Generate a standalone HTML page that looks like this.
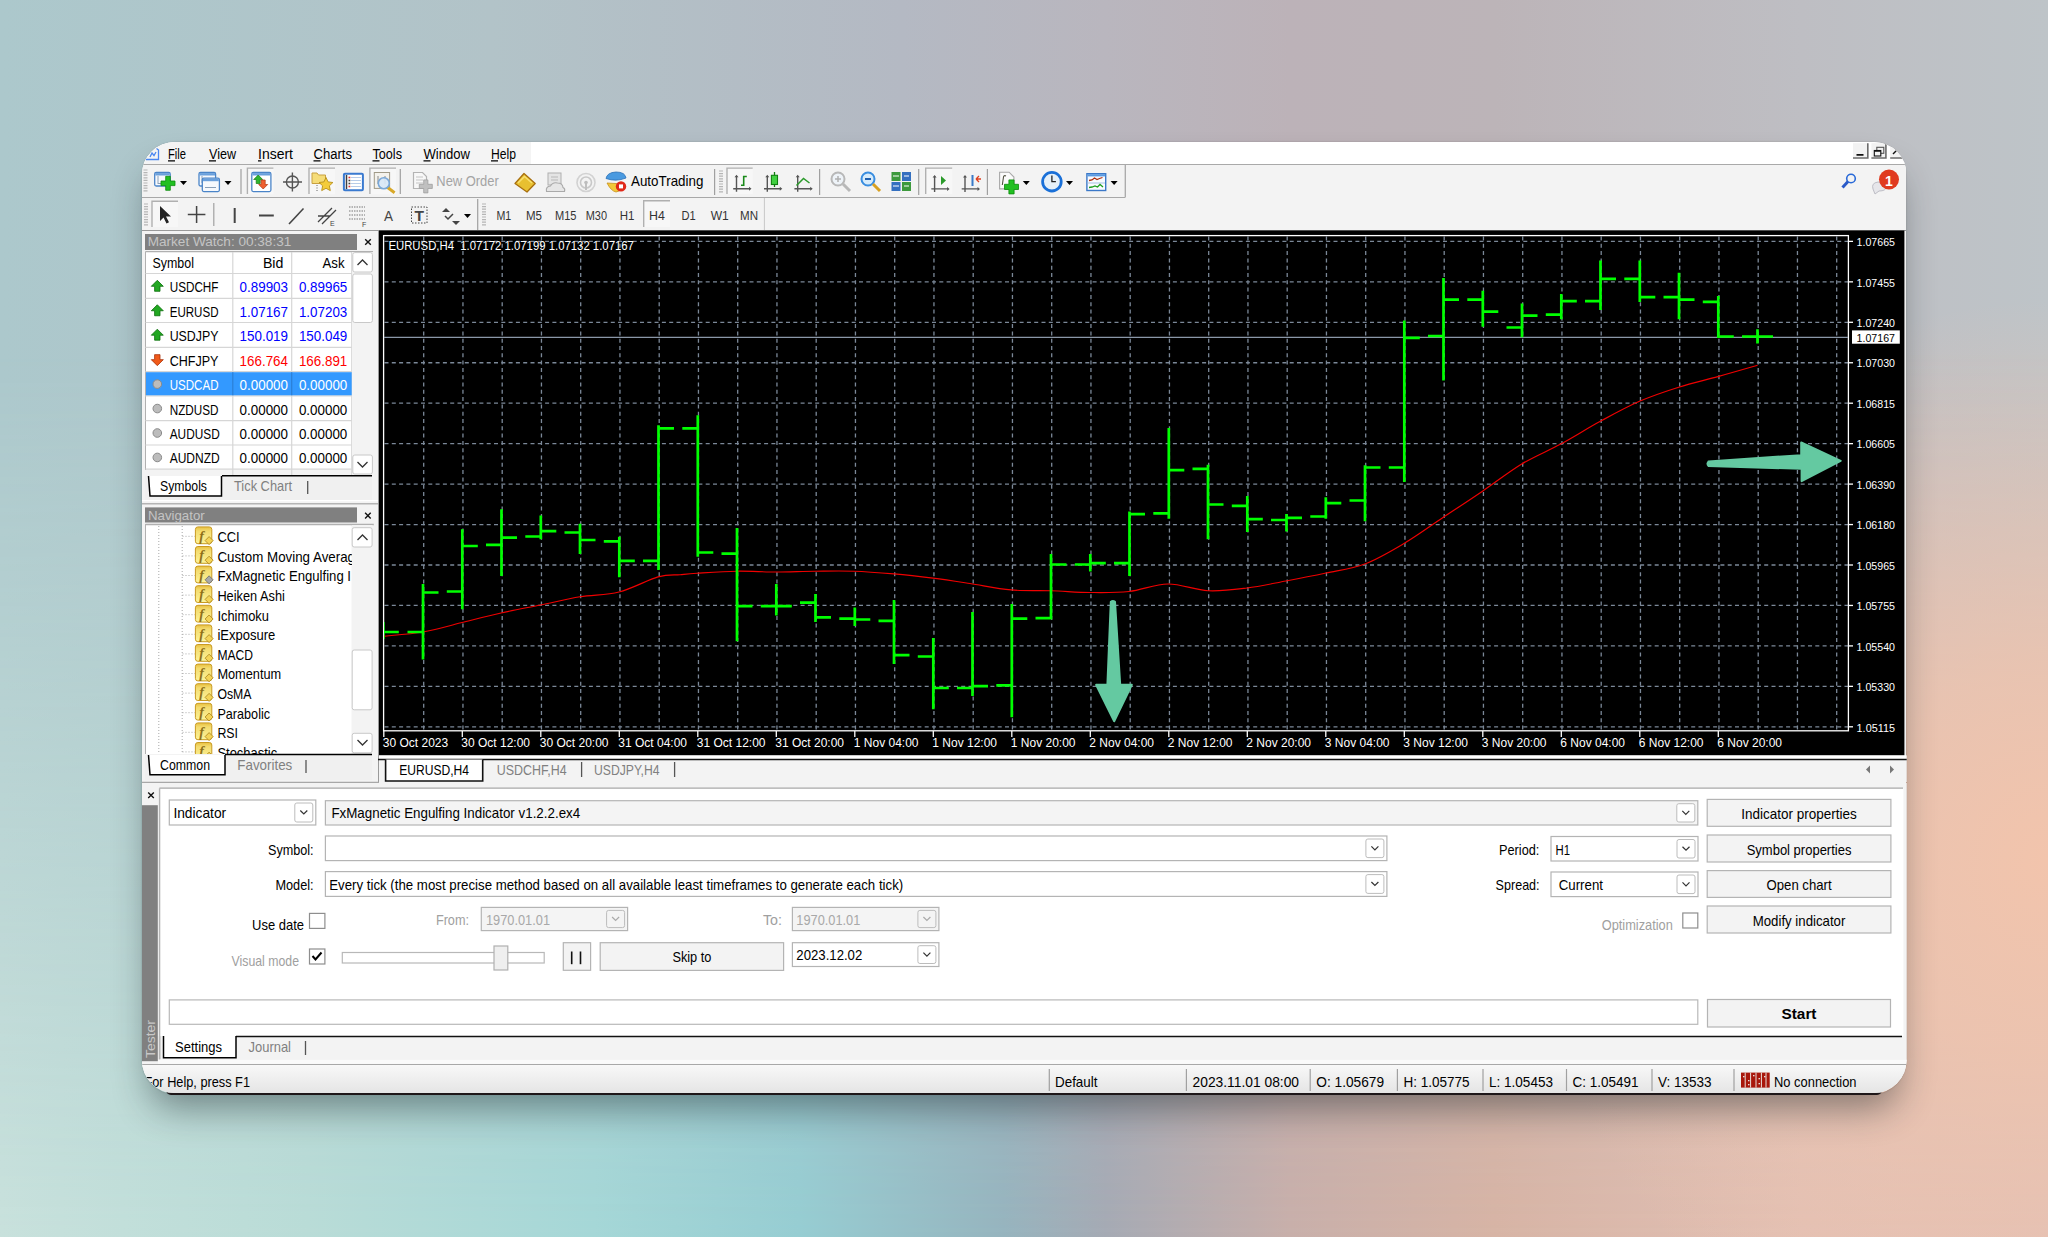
<!DOCTYPE html>
<html><head><meta charset="utf-8"><title>MetaTrader 4</title>
<style>
html,body{margin:0;padding:0;}
body{width:2048px;height:1237px;overflow:hidden;position:relative;font-family:"Liberation Sans", sans-serif;
background:linear-gradient(90deg, rgb(172,200,204) 0%, rgb(178,195,200) 24%, rgb(180,185,195) 44%, rgb(185,182,190) 54%, rgb(188,178,184) 63%, rgb(188,180,184) 73%, rgb(190,190,195) 88%, rgb(190,196,200) 100%);
}
#bg2{position:absolute;left:0;top:0;width:2048px;height:1237px;
background:linear-gradient(90deg, rgb(200,225,220) 0%, rgb(185,220,215) 15%, rgb(165,215,215) 29%, rgb(150,205,210) 39%, rgb(150,180,190) 49%, rgb(165,170,180) 54%, rgb(200,175,170) 63%, rgb(215,180,165) 73%, rgb(226,192,180) 88%, rgb(224,192,182) 100%);
-webkit-mask-image:linear-gradient(180deg, rgba(0,0,0,0) 0px, rgba(0,0,0,0) 350px, rgba(0,0,0,1) 1237px);mask-image:linear-gradient(180deg, rgba(0,0,0,0) 0px, rgba(0,0,0,0) 350px, rgba(0,0,0,1) 1237px);}
#bg3{position:absolute;left:0;top:0;width:2048px;height:1237px;background:radial-gradient(ellipse 520px 560px at 2048px 860px, rgba(242,196,172,1) 0%, rgba(242,196,172,0.75) 35%, rgba(242,196,172,0) 100%);}
#band{position:absolute;left:166px;top:1090px;width:1716px;height:5px;background:#1e1719;border-radius:0 0 16px 16px;}
#shadow{position:absolute;left:142px;top:142px;width:1764px;height:952px;border-radius:33px;box-shadow:0 0 1.5px rgba(0,0,0,0.3), 0 22px 36px -8px rgba(20,30,35,0.45);}
svg{position:absolute;left:0;top:0;}
text{font-family:"Liberation Sans", sans-serif;}
</style></head><body>
<div id="bg2"></div><div id="bg3"></div><div id="shadow"></div><div id="band"></div>
<svg width="2048" height="1237" viewBox="0 0 2048 1237">
<defs>
<clipPath id="win"><rect x="141.8" y="142" width="1764.9" height="950.9" rx="33" ry="33"/></clipPath>
<clipPath id="plot"><rect x="380" y="232" width="1525" height="524"/></clipPath>
<linearGradient id="navg" x1="0" y1="0" x2="0" y2="1"><stop offset="0" stop-color="#e8c040"/><stop offset="0.25" stop-color="#f4dc70"/><stop offset="1" stop-color="#fcf49a"/></linearGradient>
<linearGradient id="sbar" x1="0" y1="0" x2="0" y2="1"><stop offset="0" stop-color="#f8f8f8"/><stop offset="1" stop-color="#e4e4e4"/></linearGradient>
</defs>
<g clip-path="url(#win)">

<rect x="142" y="142" width="1764" height="952" fill="#f3f3f3"/>
<rect x="142" y="142" width="1764" height="22" fill="#ffffff"/>
<rect x="142" y="142" width="389" height="22" fill="#f4f4f4"/>
<line x1="142" y1="164.5" x2="1906" y2="164.5" stroke="#a9a9a9" stroke-width="1"/>
<text x="168" y="159.3" font-size="14" fill="#000" textLength="18.0" lengthAdjust="spacingAndGlyphs">File</text>
<line x1="168" y1="160.8" x2="175" y2="160.8" stroke="#000" stroke-width="1.2"/>
<text x="209" y="159.3" font-size="14" fill="#000" textLength="27.0" lengthAdjust="spacingAndGlyphs">View</text>
<line x1="209" y1="160.8" x2="216" y2="160.8" stroke="#000" stroke-width="1.2"/>
<text x="258" y="159.3" font-size="14" fill="#000" textLength="35.0" lengthAdjust="spacingAndGlyphs">Insert</text>
<line x1="258" y1="160.8" x2="261.5" y2="160.8" stroke="#000" stroke-width="1.2"/>
<text x="313.5" y="159.3" font-size="14" fill="#000" textLength="38.5" lengthAdjust="spacingAndGlyphs">Charts</text>
<line x1="313.5" y1="160.8" x2="320.5" y2="160.8" stroke="#000" stroke-width="1.2"/>
<text x="372.5" y="159.3" font-size="14" fill="#000" textLength="29.5" lengthAdjust="spacingAndGlyphs">Tools</text>
<line x1="372.5" y1="160.8" x2="379.5" y2="160.8" stroke="#000" stroke-width="1.2"/>
<text x="423.5" y="159.3" font-size="14" fill="#000" textLength="46.5" lengthAdjust="spacingAndGlyphs">Window</text>
<line x1="423.5" y1="160.8" x2="430.5" y2="160.8" stroke="#000" stroke-width="1.2"/>
<text x="491" y="159.3" font-size="14" fill="#000" textLength="25.0" lengthAdjust="spacingAndGlyphs">Help</text>
<line x1="491" y1="160.8" x2="498" y2="160.8" stroke="#000" stroke-width="1.2"/>
<path d="M146 159.5 H158.5 V150 L156.5 148.5" fill="none" stroke="#4a86f0" stroke-width="1.3"/><path d="M150 157 L152 153 L154 155.5 L156 152" fill="none" stroke="#4a86f0" stroke-width="1.3"/>
<rect x="1853" y="143.2" width="15.599999999999909" height="15.5" fill="#f2f2f2"/>
<path d="M1853 158 H1867.8 V143.2" fill="none" stroke="#6c6c6c" stroke-width="1.6"/>
<rect x="1871.4" y="143.2" width="15.299999999999955" height="15.5" fill="#f2f2f2"/>
<path d="M1871.4 158 H1885.9 V143.2" fill="none" stroke="#6c6c6c" stroke-width="1.6"/>
<rect x="1890.2" y="143.2" width="15.299999999999955" height="15.5" fill="#f2f2f2"/>
<path d="M1890.2 158 H1904.7 V143.2" fill="none" stroke="#6c6c6c" stroke-width="1.6"/>
<line x1="1856.5" y1="154.8" x2="1863.5" y2="154.8" stroke="#111" stroke-width="1.8"/>
<rect x="1876.8" y="147.3" width="7" height="6" fill="none" stroke="#555" stroke-width="1.1"/>
<rect x="1874.3" y="150.5" width="6.5" height="5.5" fill="#f2f2f2" stroke="#111" stroke-width="1.1"/>
<line x1="1874.3" y1="151" x2="1880.8" y2="151" stroke="#111" stroke-width="1.6"/>
<line x1="1893" y1="154" x2="1897" y2="150" stroke="#111" stroke-width="1.4"/>
<rect x="142" y="165" width="1764" height="32" fill="#f3f3f3"/>
<line x1="142" y1="197.5" x2="1125.5" y2="197.5" stroke="#a8a8a8" stroke-width="1"/>
<rect x="142" y="198" width="1764" height="32" fill="#f3f3f3"/>
<line x1="142" y1="230.5" x2="1906" y2="230.5" stroke="#9a9a9a" stroke-width="1"/>
<line x1="143.5" y1="170" x2="147.5" y2="170" stroke="#b5b5b5" stroke-width="1.2"/>
<line x1="143.5" y1="172.6" x2="147.5" y2="172.6" stroke="#b5b5b5" stroke-width="1.2"/>
<line x1="143.5" y1="175.2" x2="147.5" y2="175.2" stroke="#b5b5b5" stroke-width="1.2"/>
<line x1="143.5" y1="177.79999999999998" x2="147.5" y2="177.79999999999998" stroke="#b5b5b5" stroke-width="1.2"/>
<line x1="143.5" y1="180.39999999999998" x2="147.5" y2="180.39999999999998" stroke="#b5b5b5" stroke-width="1.2"/>
<line x1="143.5" y1="182.99999999999997" x2="147.5" y2="182.99999999999997" stroke="#b5b5b5" stroke-width="1.2"/>
<line x1="143.5" y1="185.59999999999997" x2="147.5" y2="185.59999999999997" stroke="#b5b5b5" stroke-width="1.2"/>
<line x1="143.5" y1="188.19999999999996" x2="147.5" y2="188.19999999999996" stroke="#b5b5b5" stroke-width="1.2"/>
<line x1="143.5" y1="190.79999999999995" x2="147.5" y2="190.79999999999995" stroke="#b5b5b5" stroke-width="1.2"/>
<line x1="1125.3" y1="165" x2="1125.3" y2="197" stroke="#a8a8a8" stroke-width="1.3"/>
<rect x="154.7" y="172.5" width="15.5" height="13.5" fill="#f6f9fd" stroke="#4a84c8" stroke-width="1.3" rx="1.5"/>
<rect x="155.29999999999998" y="173.1" width="14.3" height="2.4" fill="#6aa0dc"/>
<line x1="158" y1="176" x2="158" y2="184" stroke="#8aa0b8" stroke-width="1"/>
<line x1="158" y1="183.5" x2="166" y2="183.5" stroke="#8aa0b8" stroke-width="1"/>
<path d="M165.7 176.3 h4.6 v4.7 h4.7 v4.6 h-4.7 v4.7 h-4.6 v-4.7 h-4.7 v-4.6 h4.7 z" fill="#21c021" stroke="#0b8a0b" stroke-width="0.8"/>
<path d="M180 181 L187 181 L183.5 185 Z" fill="#000"/>
<rect x="199" y="172.5" width="16.599999999999994" height="13.5" fill="#f6f9fd" stroke="#4a84c8" stroke-width="1.3" rx="1.5"/>
<rect x="199.6" y="173.1" width="15.399999999999995" height="2.4" fill="#6aa0dc"/>
<line x1="202" y1="176" x2="202" y2="183" stroke="#8aa0b8" stroke-width="1"/>
<line x1="202" y1="182" x2="212" y2="182" stroke="#8aa0b8" stroke-width="1"/>
<rect x="202.3" y="178.2" width="17.099999999999994" height="13.400000000000006" fill="#f6f9fd" stroke="#4a84c8" stroke-width="1.3" rx="1.5"/>
<rect x="202.9" y="178.79999999999998" width="15.899999999999995" height="2.4" fill="#6aa0dc"/>
<line x1="205" y1="187.5" x2="216" y2="187.5" stroke="#8aa0b8" stroke-width="1"/>
<path d="M224.5 181 L231.5 181 L228.0 185 Z" fill="#000"/>
<line x1="241" y1="169" x2="241" y2="194" stroke="#a0a0a0" stroke-width="1.2"/>
<rect x="246.7" y="167.4" width="26.69999999999999" height="26.69999999999999" fill="#f7f7f7"/>
<path d="M247.39999999999998 194.1 V168.1 H273.4" fill="none" stroke="#b0b0b0" stroke-width="1.4"/>
<rect x="251.8" y="172.5" width="19.099999999999966" height="19.099999999999994" fill="#ffffff" stroke="#4a84c8" stroke-width="1.3" rx="1.5"/>
<rect x="252.4" y="173.1" width="17.899999999999967" height="2.4" fill="#6aa0dc"/>
<path d="M258.2 175 l4.5 4.5 h-2.5 v4 h-4 v-4 h-2.5 z" fill="#2fb52f" stroke="#157a15" stroke-width="0.7"/>
<path d="M263.2 189 l4.5 -4.5 h-2.5 v-4.5 h-4 v4.5 h-2.5 z" fill="#f06030" stroke="#b03810" stroke-width="0.7"/>
<circle cx="292.4" cy="182" r="6" fill="none" stroke="#555" stroke-width="1.4"/>
<line x1="283" y1="182" x2="302" y2="182" stroke="#555" stroke-width="1.4"/>
<line x1="292.4" y1="172.5" x2="292.4" y2="191.5" stroke="#555" stroke-width="1.4"/>
<rect x="308.3" y="167.4" width="26.69999999999999" height="26.69999999999999" fill="#f7f7f7"/>
<path d="M309.0 194.1 V168.1 H335" fill="none" stroke="#b0b0b0" stroke-width="1.4"/>
<path d="M312 173 h5 l1.5 2 h7 v8.5 h-13.5 z" fill="#f5dc78" stroke="#c8a040" stroke-width="1"/>
<path d="M326 177.5 l2.1 4.4 l4.8 0.6 l-3.5 3.3 l0.9 4.8 l-4.3 -2.3 l-4.3 2.3 l0.9 -4.8 l-3.5 -3.3 l4.8 -0.6 z" fill="#f4cc3a" stroke="#b8901a" stroke-width="0.9"/>
<line x1="317" y1="185" x2="317" y2="192" stroke="#666" stroke-width="1" stroke-dasharray="1 1.5"/>
<rect x="343.9" y="173.8" width="19" height="16.5" fill="#ffffff" stroke="#3a7ad0" stroke-width="2" rx="1"/>
<line x1="346.5" y1="175" x2="346.5" y2="189" stroke="#404040" stroke-width="1.5"/>
<rect x="348.5" y="176.7" width="1.8" height="1.6" fill="#e03030"/>
<line x1="351" y1="177.5" x2="361" y2="177.5" stroke="#b8cce8" stroke-width="1"/>
<rect x="348.5" y="179.7" width="1.8" height="1.6" fill="#404040"/>
<line x1="351" y1="180.5" x2="361" y2="180.5" stroke="#b8cce8" stroke-width="1"/>
<rect x="348.5" y="182.7" width="1.8" height="1.6" fill="#404040"/>
<line x1="351" y1="183.5" x2="361" y2="183.5" stroke="#b8cce8" stroke-width="1"/>
<rect x="348.5" y="185.7" width="1.8" height="1.6" fill="#e03030"/>
<line x1="351" y1="186.5" x2="361" y2="186.5" stroke="#b8cce8" stroke-width="1"/>
<rect x="369.2" y="167.4" width="26.80000000000001" height="26.69999999999999" fill="#f7f7f7"/>
<path d="M369.9 194.1 V168.1 H396" fill="none" stroke="#b0b0b0" stroke-width="1.4"/>
<rect x="374.3" y="172.5" width="15.3" height="15.9" fill="#f4f2ec" stroke="#a09a88" stroke-width="1"/>
<line x1="378" y1="176" x2="378" y2="184" stroke="#888" stroke-width="1"/>
<line x1="385" y1="176" x2="385" y2="184" stroke="#888" stroke-width="1"/>
<line x1="387" y1="187" x2="394.6" y2="192.8" stroke="#d8a828" stroke-width="3"/>
<circle cx="383.8" cy="183.3" r="5.5" fill="#d8e8f8" fill-opacity="0.9" stroke="#7aa8d8" stroke-width="1.6"/>
<line x1="400.3" y1="169" x2="400.3" y2="194" stroke="#a0a0a0" stroke-width="1.2"/>
<path d="M413.5 172.5 h9 l4 4 v12 h-13 z" fill="#f8f8f8" stroke="#b4b4b4" stroke-width="1.2"/>
<line x1="416" y1="177" x2="423" y2="177" stroke="#c4c4c4" stroke-width="1"/>
<line x1="416" y1="180" x2="423" y2="180" stroke="#c4c4c4" stroke-width="1"/>
<line x1="416" y1="183" x2="423" y2="183" stroke="#c4c4c4" stroke-width="1"/>
<path d="M423.7 179.9 h4.2 v4.4 h4.4 v4.2 h-4.4 v4.4 h-4.2 v-4.4 h-4.4 v-4.2 h4.4 z" fill="#c0c0c0" stroke="#a0a0a0" stroke-width="0.8"/>
<text x="436.3" y="186.4" font-size="14.3" fill="#a4a4a4" textLength="62.5" lengthAdjust="spacingAndGlyphs">New Order</text>
<path d="M515 183.5 L524 173.5 L535.2 183.5 L527 192 Z" fill="#e8c030" stroke="#a87010" stroke-width="1.3" stroke-linejoin="round"/>
<path d="M518 183 L524.5 176.5 L532 183" fill="none" stroke="#f8e070" stroke-width="1.5"/>
<rect x="548" y="173" width="13" height="12" fill="#e4e4e4" stroke="#b0b0b0" stroke-width="1"/>
<line x1="551" y1="177" x2="558" y2="177" stroke="#b8b8b8" stroke-width="1"/>
<line x1="551" y1="180" x2="558" y2="180" stroke="#b8b8b8" stroke-width="1"/>
<path d="M546.5 191.5 q-1 -5 4 -5.5 q2 -4 7 -3 q5 0 5.5 4.5 q2.5 1 1.5 4 z" fill="#e6e6e6" stroke="#aaaaaa" stroke-width="1.1"/>
<circle cx="586" cy="182.5" r="9" fill="none" stroke="#d2d2d2" stroke-width="1.6"/><circle cx="586" cy="182.5" r="5.5" fill="none" stroke="#c8c8c8" stroke-width="1.6"/><path d="M586 183 v7" stroke="#c0c0c0" stroke-width="2"/><circle cx="586" cy="182.5" r="1.8" fill="#bdbdbd"/>
<path d="M607 183 q4 8 9 9 q6 -1 8 -8 z" fill="#f2c838" stroke="#c89020" stroke-width="0.8"/>
<path d="M606 178.5 q1 -6 10 -6.5 q9 0 10 6 q-10 4 -20 0.5 z" fill="#4a9ae0" stroke="#2a70b8" stroke-width="0.8"/>
<circle cx="621" cy="186.4" r="5.2" fill="#e02818"/><rect x="619" y="184.4" width="4" height="4" fill="#fff"/>
<text x="631" y="186.4" font-size="14.3" fill="#000" textLength="72.4" lengthAdjust="spacingAndGlyphs">AutoTrading</text>
<line x1="714.6" y1="169" x2="714.6" y2="195" stroke="#a0a0a0" stroke-width="1.2"/>
<line x1="719" y1="171" x2="723" y2="171" stroke="#b5b5b5" stroke-width="1.2"/>
<line x1="719" y1="173.6" x2="723" y2="173.6" stroke="#b5b5b5" stroke-width="1.2"/>
<line x1="719" y1="176.2" x2="723" y2="176.2" stroke="#b5b5b5" stroke-width="1.2"/>
<line x1="719" y1="178.79999999999998" x2="723" y2="178.79999999999998" stroke="#b5b5b5" stroke-width="1.2"/>
<line x1="719" y1="181.39999999999998" x2="723" y2="181.39999999999998" stroke="#b5b5b5" stroke-width="1.2"/>
<line x1="719" y1="183.99999999999997" x2="723" y2="183.99999999999997" stroke="#b5b5b5" stroke-width="1.2"/>
<line x1="719" y1="186.59999999999997" x2="723" y2="186.59999999999997" stroke="#b5b5b5" stroke-width="1.2"/>
<line x1="719" y1="189.19999999999996" x2="723" y2="189.19999999999996" stroke="#b5b5b5" stroke-width="1.2"/>
<line x1="719" y1="191.79999999999995" x2="723" y2="191.79999999999995" stroke="#b5b5b5" stroke-width="1.2"/>
<rect x="726.3" y="167.4" width="26.40000000000009" height="26.599999999999994" fill="#f7f7f7"/>
<path d="M727.0 194 V168.1 H752.7" fill="none" stroke="#b0b0b0" stroke-width="1.4"/>
<line x1="736.5" y1="176.3" x2="736.5" y2="191.8" stroke="#555" stroke-width="1.4"/>
<line x1="733.2" y1="188.8" x2="750.0" y2="188.8" stroke="#555" stroke-width="1.4"/>
<path d="M734.5 177.3 L736.5 174.8 L738.5 177.3 Z M749.0 186.8 L751.5 188.8 L749.0 190.8 Z" fill="#555"/>
<path d="M741 185.3 H743.7 V176.5 H746.8" fill="none" stroke="#1a8a1a" stroke-width="1.6"/>
<line x1="767.3" y1="176.3" x2="767.3" y2="191.8" stroke="#555" stroke-width="1.4"/>
<line x1="764.0" y1="188.8" x2="780.8" y2="188.8" stroke="#555" stroke-width="1.4"/>
<path d="M765.3 177.3 L767.3 174.8 L769.3 177.3 Z M779.8 186.8 L782.3 188.8 L779.8 190.8 Z" fill="#555"/>
<line x1="774.5" y1="172" x2="774.5" y2="187" stroke="#108010" stroke-width="1.3"/>
<rect x="771.4" y="175.3" width="6.1" height="9.2" fill="#40d040" stroke="#108010" stroke-width="1.1"/>
<line x1="797.7" y1="176.3" x2="797.7" y2="191.8" stroke="#555" stroke-width="1.4"/>
<line x1="794.4000000000001" y1="188.8" x2="811.2" y2="188.8" stroke="#555" stroke-width="1.4"/>
<path d="M795.7 177.3 L797.7 174.8 L799.7 177.3 Z M810.2 186.8 L812.7 188.8 L810.2 190.8 Z" fill="#555"/>
<path d="M796.5 185.5 L803.5 178.5 L809.5 183" fill="none" stroke="#2a9a2a" stroke-width="1.5"/>
<line x1="819.6" y1="169" x2="819.6" y2="195" stroke="#a0a0a0" stroke-width="1.2"/>
<circle cx="838" cy="179" r="6.5" fill="#eef3f8" stroke="#b8b8b8" stroke-width="2"/><path d="M835 179 h6 M838 176 v6" stroke="#b0b0b0" stroke-width="1.5"/>
<line x1="843" y1="184" x2="850" y2="191" stroke="#b8b8b8" stroke-width="3"/>
<circle cx="868" cy="179" r="6.5" fill="#d8ecfb" stroke="#3a8ee0" stroke-width="2"/><path d="M865 179 h6" stroke="#2060b0" stroke-width="2"/>
<line x1="873" y1="184" x2="880" y2="191" stroke="#d8a020" stroke-width="3"/>
<rect x="891.5" y="172" width="9" height="9" fill="#3d9a3d"/>
<rect x="902" y="172" width="9" height="9" fill="#3470c0"/>
<rect x="891.5" y="182" width="9" height="9" fill="#3470c0"/>
<rect x="902" y="182" width="9" height="9" fill="#3d9a3d"/>
<line x1="893" y1="176" x2="899" y2="176" stroke="#fff" stroke-width="1.2"/>
<line x1="904" y1="176" x2="909" y2="176" stroke="#fff" stroke-width="1.2"/>
<line x1="893" y1="186" x2="899" y2="186" stroke="#fff" stroke-width="1.2"/>
<line x1="904" y1="186" x2="909" y2="186" stroke="#fff" stroke-width="1.2"/>
<line x1="918.7" y1="169" x2="918.7" y2="195" stroke="#a0a0a0" stroke-width="1.2"/>
<rect x="925" y="167.4" width="27.200000000000045" height="26.599999999999994" fill="#f7f7f7"/>
<path d="M925.7 194 V168.1 H952.2" fill="none" stroke="#b0b0b0" stroke-width="1.4"/>
<line x1="934.6" y1="176.4" x2="934.6" y2="191.9" stroke="#555" stroke-width="1.4"/>
<line x1="931.3000000000001" y1="188.9" x2="948.1" y2="188.9" stroke="#555" stroke-width="1.4"/>
<path d="M932.6 177.4 L934.6 174.9 L936.6 177.4 Z M947.1 186.9 L949.6 188.9 L947.1 190.9 Z" fill="#555"/>
<path d="M941 176 l5 4.5 l-5 4.5 z" fill="#2a9a2a"/>
<line x1="965" y1="176.4" x2="965" y2="191.9" stroke="#555" stroke-width="1.4"/>
<line x1="961.7" y1="188.9" x2="978.5" y2="188.9" stroke="#555" stroke-width="1.4"/>
<path d="M963 177.4 L965 174.9 L967 177.4 Z M977.5 186.9 L980 188.9 L977.5 190.9 Z" fill="#555"/>
<line x1="972.5" y1="175" x2="972.5" y2="186" stroke="#3a7ac8" stroke-width="2"/>
<path d="M981 179 l-5 0 M976 179 l3 -3 M976 179 l3 3" stroke="#e04020" stroke-width="1.3" fill="none"/>
<line x1="987.4" y1="169" x2="987.4" y2="195" stroke="#a0a0a0" stroke-width="1.2"/>
<path d="M999.6 172.2 h9.5 l4.8 4.8 v11.9 h-14.3 z" fill="#fbfbfb" stroke="#a8a8a8" stroke-width="1.1"/>
<path d="M1006 176 q-2 -1 -2.5 1 l-1.2 8" fill="none" stroke="#505040" stroke-width="1.1"/>
<path d="M1008.9 179.9 h5.2 v4.4 h4.4 v5.2 h-4.4 v4.4 h-5.2 v-4.4 h-4.4 v-5.2 h4.4 z" fill="#21c021" stroke="#0b8a0b" stroke-width="0.8"/>
<path d="M1022.8 181 L1029.8 181 L1026.3 185 Z" fill="#000"/>
<circle cx="1051.9" cy="181.7" r="9.3" fill="#e6f0f8" stroke="#1a70d8" stroke-width="2.8"/>
<path d="M1051.9 175.5 v6.2 h4" stroke="#222" stroke-width="1.3" fill="none"/>
<path d="M1066 181 L1073 181 L1069.5 185 Z" fill="#000"/>
<rect x="1086.9" y="173.7" width="18.8" height="16.8" fill="#f8fbff" stroke="#3b78c8" stroke-width="1.4"/>
<rect x="1087.4" y="174.2" width="17.8" height="2.2" fill="#5a9ae0"/>
<line x1="1087.5" y1="183" x2="1105" y2="183" stroke="#a8c4e4" stroke-width="1.2"/>
<path d="M1089 180.5 l3 -0.5 l2.5 -2 l2.5 1.5 l2.5 -1 l3 -1" stroke="#b03010" stroke-width="1.3" fill="none"/><path d="M1089 187.5 l3 -0.5 l3 -1 l2.5 1 l2.5 -2.5 l3 2.5" stroke="#20a020" stroke-width="1.3" fill="none"/>
<path d="M1110.6 181 L1117.6 181 L1114.1 185 Z" fill="#000"/>
<circle cx="1851" cy="178.5" r="4.3" fill="none" stroke="#2a6ad8" stroke-width="1.6"/>
<line x1="1848" y1="181.5" x2="1842.5" y2="187.5" stroke="#2a5ac8" stroke-width="3"/>
<path d="M1873 189 q-2 -6 5 -7 q8 0 8 5 q0 4 -7 4 l-4 3 z" fill="#e6e6ea" stroke="#bdbdc5" stroke-width="1"/>
<circle cx="1889" cy="179.5" r="10" fill="#e03a20"/>
<text x="1889" y="185.8" font-size="14" fill="#fff" text-anchor="middle" font-weight="bold">1</text>
<line x1="144" y1="204" x2="148" y2="204" stroke="#b5b5b5" stroke-width="1.2"/>
<line x1="144" y1="206.6" x2="148" y2="206.6" stroke="#b5b5b5" stroke-width="1.2"/>
<line x1="144" y1="209.2" x2="148" y2="209.2" stroke="#b5b5b5" stroke-width="1.2"/>
<line x1="144" y1="211.79999999999998" x2="148" y2="211.79999999999998" stroke="#b5b5b5" stroke-width="1.2"/>
<line x1="144" y1="214.39999999999998" x2="148" y2="214.39999999999998" stroke="#b5b5b5" stroke-width="1.2"/>
<line x1="144" y1="216.99999999999997" x2="148" y2="216.99999999999997" stroke="#b5b5b5" stroke-width="1.2"/>
<line x1="144" y1="219.59999999999997" x2="148" y2="219.59999999999997" stroke="#b5b5b5" stroke-width="1.2"/>
<line x1="144" y1="222.19999999999996" x2="148" y2="222.19999999999996" stroke="#b5b5b5" stroke-width="1.2"/>
<line x1="144" y1="224.79999999999995" x2="148" y2="224.79999999999995" stroke="#b5b5b5" stroke-width="1.2"/>
<rect x="151.3" y="200.5" width="26.69999999999999" height="26.5" fill="#f7f7f7"/>
<path d="M152.0 227 V201.2 H178" fill="none" stroke="#b0b0b0" stroke-width="1.4"/>
<path d="M160 206 l0 15 l3.5 -3.5 l3 6 l2.5 -1.2 l-3 -5.8 l5 0 z" fill="#222"/>
<line x1="187.8" y1="214.6" x2="205.4" y2="214.6" stroke="#444" stroke-width="1.5"/>
<line x1="196.6" y1="206" x2="196.6" y2="223" stroke="#444" stroke-width="1.5"/>
<line x1="213.8" y1="203" x2="213.8" y2="226" stroke="#a0a0a0" stroke-width="1.2"/>
<line x1="234.7" y1="208" x2="234.7" y2="223" stroke="#444" stroke-width="2"/>
<line x1="259" y1="215.6" x2="273.8" y2="215.6" stroke="#444" stroke-width="2"/>
<line x1="289" y1="224" x2="303.5" y2="208.5" stroke="#444" stroke-width="1.6"/>
<path d="M318 222 l14 -14 M322 224 l14 -14 M318 216 l12 0" stroke="#444" stroke-width="1.3" fill="none"/>
<text x="330" y="226" font-size="7" fill="#444">E</text>
<line x1="349" y1="207" x2="365" y2="207" stroke="#777" stroke-width="1" stroke-dasharray="1.5 1"/>
<line x1="349" y1="211" x2="365" y2="211" stroke="#777" stroke-width="1" stroke-dasharray="1.5 1"/>
<line x1="349" y1="215" x2="365" y2="215" stroke="#777" stroke-width="1" stroke-dasharray="1.5 1"/>
<line x1="349" y1="219" x2="365" y2="219" stroke="#777" stroke-width="1" stroke-dasharray="1.5 1"/>
<text x="362" y="227" font-size="7" fill="#444">F</text>
<text x="384" y="221.3" font-size="14" fill="#444" textLength="9.0" lengthAdjust="spacingAndGlyphs">A</text>
<rect x="411.5" y="207" width="15.5" height="16" fill="none" stroke="#444" stroke-width="1" stroke-dasharray="1.5 1.5"/>
<text x="414.5" y="221.3" font-size="14" fill="#444" textLength="9.5" lengthAdjust="spacingAndGlyphs" font-weight="bold">T</text>
<path d="M442 212 l4 -4 l4 4 z M452 221 l4 4 l4 -4 z" fill="#444"/><path d="M445 216 l3 3 l5 -5" stroke="#444" stroke-width="1.5" fill="none"/>
<path d="M464 214 L471 214 L467.5 218 Z" fill="#000"/>
<line x1="477.7" y1="199" x2="477.7" y2="230" stroke="#a0a0a0" stroke-width="1.2"/>
<line x1="482" y1="204" x2="486" y2="204" stroke="#b5b5b5" stroke-width="1.2"/>
<line x1="482" y1="206.6" x2="486" y2="206.6" stroke="#b5b5b5" stroke-width="1.2"/>
<line x1="482" y1="209.2" x2="486" y2="209.2" stroke="#b5b5b5" stroke-width="1.2"/>
<line x1="482" y1="211.79999999999998" x2="486" y2="211.79999999999998" stroke="#b5b5b5" stroke-width="1.2"/>
<line x1="482" y1="214.39999999999998" x2="486" y2="214.39999999999998" stroke="#b5b5b5" stroke-width="1.2"/>
<line x1="482" y1="216.99999999999997" x2="486" y2="216.99999999999997" stroke="#b5b5b5" stroke-width="1.2"/>
<line x1="482" y1="219.59999999999997" x2="486" y2="219.59999999999997" stroke="#b5b5b5" stroke-width="1.2"/>
<line x1="482" y1="222.19999999999996" x2="486" y2="222.19999999999996" stroke="#b5b5b5" stroke-width="1.2"/>
<line x1="482" y1="224.79999999999995" x2="486" y2="224.79999999999995" stroke="#b5b5b5" stroke-width="1.2"/>
<line x1="764.4" y1="198" x2="764.4" y2="230" stroke="#c8c8c8" stroke-width="1"/>
<rect x="643" y="200" width="27" height="27" fill="#f7f7f7"/>
<path d="M643.7 227 V200.7 H670" fill="none" stroke="#b0b0b0" stroke-width="1.4"/>
<text x="496.5" y="220.1" font-size="12.0" fill="#333" textLength="14.8" lengthAdjust="spacingAndGlyphs">M1</text>
<text x="526" y="220.1" font-size="12.0" fill="#333" textLength="16.0" lengthAdjust="spacingAndGlyphs">M5</text>
<text x="555" y="220.1" font-size="12.0" fill="#333" textLength="21.5" lengthAdjust="spacingAndGlyphs">M15</text>
<text x="585.7" y="220.1" font-size="12.0" fill="#333" textLength="21.3" lengthAdjust="spacingAndGlyphs">M30</text>
<text x="619.8" y="220.1" font-size="12.0" fill="#333" textLength="14.7" lengthAdjust="spacingAndGlyphs">H1</text>
<text x="649" y="220.1" font-size="12.0" fill="#333" textLength="15.8" lengthAdjust="spacingAndGlyphs">H4</text>
<text x="681.4" y="220.1" font-size="12.0" fill="#333" textLength="14.2" lengthAdjust="spacingAndGlyphs">D1</text>
<text x="710.7" y="220.1" font-size="12.0" fill="#333" textLength="18.1" lengthAdjust="spacingAndGlyphs">W1</text>
<text x="740" y="220.1" font-size="12.0" fill="#333" textLength="18.0" lengthAdjust="spacingAndGlyphs">MN</text>
<rect x="142" y="231" width="237" height="551" fill="#f3f3f3"/>
<rect x="145" y="234" width="212" height="16" fill="#808080"/>
<text x="147.7" y="245.9" font-size="13.4" fill="#c4c4c4" textLength="143.6" lengthAdjust="spacingAndGlyphs">Market Watch: 00:38:31</text>
<path d="M365.2 239.2 L370.8 244.8 M370.8 239.2 L365.2 244.8" stroke="#111" stroke-width="1.4"/>
<rect x="145.5" y="251.5" width="206" height="218" fill="#ffffff"/>
<line x1="145.5" y1="251.7" x2="373" y2="251.7" stroke="#b0b0b0" stroke-width="1.3"/>
<line x1="145.5" y1="251.5" x2="145.5" y2="470" stroke="#b0b0b0" stroke-width="1"/>
<line x1="145.5" y1="273.5" x2="351.7" y2="273.5" stroke="#d6d6d6" stroke-width="1.2"/>
<line x1="145.5" y1="298.4" x2="351.7" y2="298.4" stroke="#d6d6d6" stroke-width="1.2"/>
<line x1="145.5" y1="322.5" x2="351.7" y2="322.5" stroke="#d6d6d6" stroke-width="1.2"/>
<line x1="145.5" y1="347.4" x2="351.7" y2="347.4" stroke="#d6d6d6" stroke-width="1.2"/>
<line x1="145.5" y1="371.6" x2="351.7" y2="371.6" stroke="#d6d6d6" stroke-width="1.2"/>
<line x1="145.5" y1="395.8" x2="351.7" y2="395.8" stroke="#d6d6d6" stroke-width="1.2"/>
<line x1="145.5" y1="420.6" x2="351.7" y2="420.6" stroke="#d6d6d6" stroke-width="1.2"/>
<line x1="145.5" y1="445" x2="351.7" y2="445" stroke="#d6d6d6" stroke-width="1.2"/>
<line x1="145.5" y1="469.2" x2="351.7" y2="469.2" stroke="#d6d6d6" stroke-width="1.2"/>
<line x1="232.8" y1="252" x2="232.8" y2="476" stroke="#d6d6d6" stroke-width="1.2"/>
<line x1="291.7" y1="252" x2="291.7" y2="476" stroke="#d6d6d6" stroke-width="1.2"/>
<line x1="351.7" y1="252" x2="351.7" y2="476" stroke="#d6d6d6" stroke-width="1"/>
<rect x="146" y="372.2" width="205.7" height="23.1" fill="#3399ff"/>
<line x1="232.8" y1="372.2" x2="232.8" y2="395.3" stroke="#2b7fd6" stroke-width="1.2"/>
<line x1="291.7" y1="372.2" x2="291.7" y2="395.3" stroke="#2b7fd6" stroke-width="1.2"/>
<text x="152.5" y="268.1" font-size="14.4" fill="#000" textLength="41.4" lengthAdjust="spacingAndGlyphs">Symbol</text>
<text x="283.4" y="268.1" font-size="14.4" fill="#000" text-anchor="end" textLength="20.5" lengthAdjust="spacingAndGlyphs">Bid</text>
<text x="344.5" y="268.1" font-size="14.4" fill="#000" text-anchor="end" textLength="22.0" lengthAdjust="spacingAndGlyphs">Ask</text>
<path d="M157.3 280.3 l6 6 h-3.3 v5 h-5.4 v-5 h-3.3 z" fill="#22a822" stroke="#0d6e0d" stroke-width="0.8"/>
<text x="169.7" y="292.3" font-size="14.4" fill="#000" textLength="48.8" lengthAdjust="spacingAndGlyphs">USDCHF</text>
<text x="288" y="292.3" font-size="14.4" fill="#0000ff" text-anchor="end" textLength="48.4" lengthAdjust="spacingAndGlyphs">0.89903</text>
<text x="347.3" y="292.3" font-size="14.4" fill="#0000ff" text-anchor="end" textLength="48.4" lengthAdjust="spacingAndGlyphs">0.89965</text>
<path d="M157.3 304.75 l6 6 h-3.3 v5 h-5.4 v-5 h-3.3 z" fill="#22a822" stroke="#0d6e0d" stroke-width="0.8"/>
<text x="169.7" y="316.75" font-size="14.4" fill="#000" textLength="48.8" lengthAdjust="spacingAndGlyphs">EURUSD</text>
<text x="288" y="316.75" font-size="14.4" fill="#0000ff" text-anchor="end" textLength="48.4" lengthAdjust="spacingAndGlyphs">1.07167</text>
<text x="347.3" y="316.75" font-size="14.4" fill="#0000ff" text-anchor="end" textLength="48.4" lengthAdjust="spacingAndGlyphs">1.07203</text>
<path d="M157.3 329.2 l6 6 h-3.3 v5 h-5.4 v-5 h-3.3 z" fill="#22a822" stroke="#0d6e0d" stroke-width="0.8"/>
<text x="169.7" y="341.2" font-size="14.4" fill="#000" textLength="48.8" lengthAdjust="spacingAndGlyphs">USDJPY</text>
<text x="288" y="341.2" font-size="14.4" fill="#0000ff" text-anchor="end" textLength="48.4" lengthAdjust="spacingAndGlyphs">150.019</text>
<text x="347.3" y="341.2" font-size="14.4" fill="#0000ff" text-anchor="end" textLength="48.4" lengthAdjust="spacingAndGlyphs">150.049</text>
<path d="M157.3 365.65 l6 -6 h-3.3 v-5 h-5.4 v5 h-3.3 z" fill="#f05a1a" stroke="#a83008" stroke-width="0.8"/>
<text x="169.7" y="365.65" font-size="14.4" fill="#000" textLength="48.8" lengthAdjust="spacingAndGlyphs">CHFJPY</text>
<text x="288" y="365.65" font-size="14.4" fill="#ff0000" text-anchor="end" textLength="48.4" lengthAdjust="spacingAndGlyphs">166.764</text>
<text x="347.3" y="365.65" font-size="14.4" fill="#ff0000" text-anchor="end" textLength="48.4" lengthAdjust="spacingAndGlyphs">166.891</text>
<circle cx="157.3" cy="384.1" r="4.3" fill="#bcbcbc" stroke="#8a8a8a" stroke-width="1"/>
<text x="169.7" y="390.1" font-size="14.4" fill="#ffffff" textLength="48.8" lengthAdjust="spacingAndGlyphs">USDCAD</text>
<text x="288" y="390.1" font-size="14.4" fill="#ffffff" text-anchor="end" textLength="48.4" lengthAdjust="spacingAndGlyphs">0.00000</text>
<text x="347.3" y="390.1" font-size="14.4" fill="#ffffff" text-anchor="end" textLength="48.4" lengthAdjust="spacingAndGlyphs">0.00000</text>
<circle cx="157.3" cy="408.55" r="4.3" fill="#bcbcbc" stroke="#8a8a8a" stroke-width="1"/>
<text x="169.7" y="414.55" font-size="14.4" fill="#000" textLength="48.8" lengthAdjust="spacingAndGlyphs">NZDUSD</text>
<text x="288" y="414.55" font-size="14.4" fill="#000" text-anchor="end" textLength="48.4" lengthAdjust="spacingAndGlyphs">0.00000</text>
<text x="347.3" y="414.55" font-size="14.4" fill="#000" text-anchor="end" textLength="48.4" lengthAdjust="spacingAndGlyphs">0.00000</text>
<circle cx="157.3" cy="433.0" r="4.3" fill="#bcbcbc" stroke="#8a8a8a" stroke-width="1"/>
<text x="169.7" y="439.0" font-size="14.4" fill="#000" textLength="50.0" lengthAdjust="spacingAndGlyphs">AUDUSD</text>
<text x="288" y="439.0" font-size="14.4" fill="#000" text-anchor="end" textLength="48.4" lengthAdjust="spacingAndGlyphs">0.00000</text>
<text x="347.3" y="439.0" font-size="14.4" fill="#000" text-anchor="end" textLength="48.4" lengthAdjust="spacingAndGlyphs">0.00000</text>
<circle cx="157.3" cy="457.45000000000005" r="4.3" fill="#bcbcbc" stroke="#8a8a8a" stroke-width="1"/>
<text x="169.7" y="463.45" font-size="14.4" fill="#000" textLength="50.0" lengthAdjust="spacingAndGlyphs">AUDNZD</text>
<text x="288" y="463.45" font-size="14.4" fill="#000" text-anchor="end" textLength="48.4" lengthAdjust="spacingAndGlyphs">0.00000</text>
<text x="347.3" y="463.45" font-size="14.4" fill="#000" text-anchor="end" textLength="48.4" lengthAdjust="spacingAndGlyphs">0.00000</text>
<rect x="352" y="252" width="20.5" height="223" fill="#f3f3f3"/>
<rect x="352.8" y="252.6" width="19.6" height="19.4" fill="#ffffff" stroke="#c8c8c8" stroke-width="1" rx="2"/>
<path d="M357.5 265 l5 -5 l5 5" fill="none" stroke="#333" stroke-width="1.3"/>
<rect x="352.8" y="274" width="19.6" height="48.5" fill="#ffffff" stroke="#c8c8c8" stroke-width="1" rx="2"/>
<rect x="352.8" y="455" width="19.6" height="19" fill="#ffffff" stroke="#c8c8c8" stroke-width="1" rx="2"/>
<path d="M357.5 462 l5 5 l5 -5" fill="none" stroke="#333" stroke-width="1.3"/>
<rect x="145" y="476" width="227" height="24" fill="#f0f0f0"/>
<line x1="222" y1="475.8" x2="372" y2="475.8" stroke="#000" stroke-width="1.5"/>
<path d="M148.5 476 L150 496 L221.5 496 L221.5 476" fill="#ffffff" stroke="#000" stroke-width="1.5"/>
<text x="160" y="490.5" font-size="14.4" fill="#000" textLength="47.0" lengthAdjust="spacingAndGlyphs">Symbols</text>
<text x="234" y="490.5" font-size="14.4" fill="#808080" textLength="58.0" lengthAdjust="spacingAndGlyphs">Tick Chart</text>
<line x1="307.7" y1="481" x2="307.7" y2="494" stroke="#555" stroke-width="1.3"/>
<line x1="142" y1="500.6" x2="378" y2="500.6" stroke="#ffffff" stroke-width="1.2"/>
<line x1="142" y1="503.8" x2="378" y2="503.8" stroke="#b4b4b4" stroke-width="1.5"/>
<rect x="145" y="507.4" width="212" height="15.1" fill="#808080"/>
<text x="148" y="519.5" font-size="13.4" fill="#c4c4c4" textLength="56.7" lengthAdjust="spacingAndGlyphs">Navigator</text>
<path d="M365.09999999999997 512.8000000000001 L370.7 518.4 M370.7 512.8000000000001 L365.09999999999997 518.4" stroke="#111" stroke-width="1.4"/>
<rect x="145.5" y="524" width="206" height="230" fill="#ffffff"/>
<line x1="145.5" y1="524.5" x2="373.8" y2="524.5" stroke="#b0b0b0" stroke-width="1.3"/>
<line x1="145.5" y1="524" x2="145.5" y2="754" stroke="#b0b0b0" stroke-width="1"/>
<line x1="158.8" y1="526" x2="158.8" y2="754" stroke="#a8a8a8" stroke-width="1" stroke-dasharray="1 2"/>
<line x1="182.2" y1="526" x2="182.2" y2="754" stroke="#a8a8a8" stroke-width="1" stroke-dasharray="1 2"/>
<clipPath id="navclip"><rect x="145" y="524.5" width="207" height="229.5"/></clipPath><g clip-path="url(#navclip)">
<line x1="182.5" y1="536.3" x2="195" y2="536.3" stroke="#a8a8a8" stroke-width="1" stroke-dasharray="1 2"/>
<rect x="195.4" y="526.9" width="16.4" height="16.8" rx="2.5" fill="url(#navg)" stroke="#c99a22" stroke-width="1"/>
<text x="199.2" y="540.5" font-size="14" fill="#8f7018" font-style="italic" font-weight="bold" style="font-family:&quot;Liberation Serif&quot;,serif">f</text>
<path d="M209.1 536.5999999999999 l4 4 l-4 4 l-4 -4 z" fill="#f4d458" stroke="#b08a20" stroke-width="0.9"/>
<text x="217.4" y="542.2" font-size="14.4" fill="#000" textLength="22.2" lengthAdjust="spacingAndGlyphs">CCI</text>
<line x1="182.5" y1="555.9" x2="195" y2="555.9" stroke="#a8a8a8" stroke-width="1" stroke-dasharray="1 2"/>
<rect x="195.4" y="546.5" width="16.4" height="16.8" rx="2.5" fill="url(#navg)" stroke="#c99a22" stroke-width="1"/>
<text x="199.2" y="560.1" font-size="14" fill="#8f7018" font-style="italic" font-weight="bold" style="font-family:&quot;Liberation Serif&quot;,serif">f</text>
<path d="M209.1 556.1999999999999 l4 4 l-4 4 l-4 -4 z" fill="#f4d458" stroke="#b08a20" stroke-width="0.9"/>
<text x="217.4" y="561.8" font-size="14.4" fill="#000" textLength="137.6" lengthAdjust="spacingAndGlyphs">Custom Moving Averag</text>
<line x1="182.5" y1="575.5" x2="195" y2="575.5" stroke="#a8a8a8" stroke-width="1" stroke-dasharray="1 2"/>
<rect x="195.4" y="566.1" width="16.4" height="16.8" rx="2.5" fill="url(#navg)" stroke="#c99a22" stroke-width="1"/>
<text x="199.2" y="579.7" font-size="14" fill="#8f7018" font-style="italic" font-weight="bold" style="font-family:&quot;Liberation Serif&quot;,serif">f</text>
<path d="M209.1 575.8 l4 4 l-4 4 l-4 -4 z" fill="#a8a8a8" stroke="#707070" stroke-width="0.9"/>
<text x="217.4" y="581.4" font-size="14.4" fill="#000" textLength="133.6" lengthAdjust="spacingAndGlyphs">FxMagnetic Engulfing I</text>
<line x1="182.5" y1="595.0999999999999" x2="195" y2="595.0999999999999" stroke="#a8a8a8" stroke-width="1" stroke-dasharray="1 2"/>
<rect x="195.4" y="585.6999999999999" width="16.4" height="16.8" rx="2.5" fill="url(#navg)" stroke="#c99a22" stroke-width="1"/>
<text x="199.2" y="599.3" font-size="14" fill="#8f7018" font-style="italic" font-weight="bold" style="font-family:&quot;Liberation Serif&quot;,serif">f</text>
<path d="M209.1 595.3999999999999 l4 4 l-4 4 l-4 -4 z" fill="#f4d458" stroke="#b08a20" stroke-width="0.9"/>
<text x="217.4" y="601.0" font-size="14.4" fill="#000" textLength="67.5" lengthAdjust="spacingAndGlyphs">Heiken Ashi</text>
<line x1="182.5" y1="614.6999999999999" x2="195" y2="614.6999999999999" stroke="#a8a8a8" stroke-width="1" stroke-dasharray="1 2"/>
<rect x="195.4" y="605.3" width="16.4" height="16.8" rx="2.5" fill="url(#navg)" stroke="#c99a22" stroke-width="1"/>
<text x="199.2" y="618.9" font-size="14" fill="#8f7018" font-style="italic" font-weight="bold" style="font-family:&quot;Liberation Serif&quot;,serif">f</text>
<path d="M209.1 614.9999999999999 l4 4 l-4 4 l-4 -4 z" fill="#f4d458" stroke="#b08a20" stroke-width="0.9"/>
<text x="217.4" y="620.6" font-size="14.4" fill="#000" textLength="51.6" lengthAdjust="spacingAndGlyphs">Ichimoku</text>
<line x1="182.5" y1="634.3" x2="195" y2="634.3" stroke="#a8a8a8" stroke-width="1" stroke-dasharray="1 2"/>
<rect x="195.4" y="624.9" width="16.4" height="16.8" rx="2.5" fill="url(#navg)" stroke="#c99a22" stroke-width="1"/>
<text x="199.2" y="638.5" font-size="14" fill="#8f7018" font-style="italic" font-weight="bold" style="font-family:&quot;Liberation Serif&quot;,serif">f</text>
<path d="M209.1 634.5999999999999 l4 4 l-4 4 l-4 -4 z" fill="#f4d458" stroke="#b08a20" stroke-width="0.9"/>
<text x="217.4" y="640.2" font-size="14.4" fill="#000" textLength="57.9" lengthAdjust="spacingAndGlyphs">iExposure</text>
<line x1="182.5" y1="653.9" x2="195" y2="653.9" stroke="#a8a8a8" stroke-width="1" stroke-dasharray="1 2"/>
<rect x="195.4" y="644.5" width="16.4" height="16.8" rx="2.5" fill="url(#navg)" stroke="#c99a22" stroke-width="1"/>
<text x="199.2" y="658.1" font-size="14" fill="#8f7018" font-style="italic" font-weight="bold" style="font-family:&quot;Liberation Serif&quot;,serif">f</text>
<path d="M209.1 654.1999999999999 l4 4 l-4 4 l-4 -4 z" fill="#f4d458" stroke="#b08a20" stroke-width="0.9"/>
<text x="217.4" y="659.8" font-size="14.4" fill="#000" textLength="35.6" lengthAdjust="spacingAndGlyphs">MACD</text>
<line x1="182.5" y1="673.5" x2="195" y2="673.5" stroke="#a8a8a8" stroke-width="1" stroke-dasharray="1 2"/>
<rect x="195.4" y="664.1" width="16.4" height="16.8" rx="2.5" fill="url(#navg)" stroke="#c99a22" stroke-width="1"/>
<text x="199.2" y="677.7" font-size="14" fill="#8f7018" font-style="italic" font-weight="bold" style="font-family:&quot;Liberation Serif&quot;,serif">f</text>
<path d="M209.1 673.8 l4 4 l-4 4 l-4 -4 z" fill="#f4d458" stroke="#b08a20" stroke-width="0.9"/>
<text x="217.4" y="679.4" font-size="14.4" fill="#000" textLength="63.8" lengthAdjust="spacingAndGlyphs">Momentum</text>
<line x1="182.5" y1="693.0999999999999" x2="195" y2="693.0999999999999" stroke="#a8a8a8" stroke-width="1" stroke-dasharray="1 2"/>
<rect x="195.4" y="683.6999999999999" width="16.4" height="16.8" rx="2.5" fill="url(#navg)" stroke="#c99a22" stroke-width="1"/>
<text x="199.2" y="697.3" font-size="14" fill="#8f7018" font-style="italic" font-weight="bold" style="font-family:&quot;Liberation Serif&quot;,serif">f</text>
<path d="M209.1 693.3999999999999 l4 4 l-4 4 l-4 -4 z" fill="#f4d458" stroke="#b08a20" stroke-width="0.9"/>
<text x="217.4" y="699.0" font-size="14.4" fill="#000" textLength="34.0" lengthAdjust="spacingAndGlyphs">OsMA</text>
<line x1="182.5" y1="712.6999999999999" x2="195" y2="712.6999999999999" stroke="#a8a8a8" stroke-width="1" stroke-dasharray="1 2"/>
<rect x="195.4" y="703.3" width="16.4" height="16.8" rx="2.5" fill="url(#navg)" stroke="#c99a22" stroke-width="1"/>
<text x="199.2" y="716.9" font-size="14" fill="#8f7018" font-style="italic" font-weight="bold" style="font-family:&quot;Liberation Serif&quot;,serif">f</text>
<path d="M209.1 712.9999999999999 l4 4 l-4 4 l-4 -4 z" fill="#f4d458" stroke="#b08a20" stroke-width="0.9"/>
<text x="217.4" y="718.6" font-size="14.4" fill="#000" textLength="52.7" lengthAdjust="spacingAndGlyphs">Parabolic</text>
<line x1="182.5" y1="732.3" x2="195" y2="732.3" stroke="#a8a8a8" stroke-width="1" stroke-dasharray="1 2"/>
<rect x="195.4" y="722.9" width="16.4" height="16.8" rx="2.5" fill="url(#navg)" stroke="#c99a22" stroke-width="1"/>
<text x="199.2" y="736.5" font-size="14" fill="#8f7018" font-style="italic" font-weight="bold" style="font-family:&quot;Liberation Serif&quot;,serif">f</text>
<path d="M209.1 732.5999999999999 l4 4 l-4 4 l-4 -4 z" fill="#f4d458" stroke="#b08a20" stroke-width="0.9"/>
<text x="217.4" y="738.2" font-size="14.4" fill="#000" textLength="20.6" lengthAdjust="spacingAndGlyphs">RSI</text>
<line x1="182.5" y1="751.9" x2="195" y2="751.9" stroke="#a8a8a8" stroke-width="1" stroke-dasharray="1 2"/>
<rect x="195.4" y="742.5" width="16.4" height="16.8" rx="2.5" fill="url(#navg)" stroke="#c99a22" stroke-width="1"/>
<text x="199.2" y="756.1" font-size="14" fill="#8f7018" font-style="italic" font-weight="bold" style="font-family:&quot;Liberation Serif&quot;,serif">f</text>
<path d="M209.1 752.1999999999999 l4 4 l-4 4 l-4 -4 z" fill="#f4d458" stroke="#b08a20" stroke-width="0.9"/>
<text x="217.4" y="757.8" font-size="14.4" fill="#000" textLength="59.8" lengthAdjust="spacingAndGlyphs">Stochastic</text>
</g>
<rect x="352" y="525" width="20.5" height="229" fill="#f3f3f3"/>
<rect x="352.2" y="527.7" width="19.9" height="19.3" fill="#ffffff" stroke="#c8c8c8" stroke-width="1" rx="2"/>
<path d="M357.5 540 l5 -5 l5 5" fill="none" stroke="#333" stroke-width="1.3"/>
<rect x="352.2" y="650" width="19.9" height="59.8" fill="#ffffff" stroke="#c8c8c8" stroke-width="1" rx="2"/>
<rect x="352.2" y="733.3" width="19.9" height="19.5" fill="#ffffff" stroke="#c8c8c8" stroke-width="1" rx="2"/>
<path d="M357.5 740 l5 5 l5 -5" fill="none" stroke="#333" stroke-width="1.3"/>
<rect x="145" y="755" width="227" height="25" fill="#f0f0f0"/>
<line x1="225" y1="754.5" x2="372" y2="754.5" stroke="#000" stroke-width="1.5"/>
<path d="M148.5 755 L150 774.7 L225 774.7 L225 755" fill="#ffffff" stroke="#000" stroke-width="1.5"/>
<text x="160" y="770.1" font-size="14.4" fill="#000" textLength="50.0" lengthAdjust="spacingAndGlyphs">Common</text>
<text x="237.3" y="770.1" font-size="14.4" fill="#808080" textLength="55.0" lengthAdjust="spacingAndGlyphs">Favorites</text>
<line x1="306" y1="760" x2="306" y2="773" stroke="#555" stroke-width="1.3"/>
<line x1="378.6" y1="231" x2="378.6" y2="782" stroke="#9a9a9a" stroke-width="1.2"/>
<rect x="379" y="230.5" width="1525.4" height="525" fill="#000000"/>
<rect x="379" y="755.4" width="1528" height="4" fill="#ffffff"/>
<g clip-path="url(#plot)">
<line x1="423.7" y1="236.5" x2="423.7" y2="730.5" stroke="#7b8898" stroke-width="1.3" stroke-dasharray="4 3.3"/>
<line x1="462.95" y1="236.5" x2="462.95" y2="730.5" stroke="#7b8898" stroke-width="1.3" stroke-dasharray="4 3.3"/>
<line x1="502.2" y1="236.5" x2="502.2" y2="730.5" stroke="#7b8898" stroke-width="1.3" stroke-dasharray="4 3.3"/>
<line x1="541.45" y1="236.5" x2="541.45" y2="730.5" stroke="#7b8898" stroke-width="1.3" stroke-dasharray="4 3.3"/>
<line x1="580.7" y1="236.5" x2="580.7" y2="730.5" stroke="#7b8898" stroke-width="1.3" stroke-dasharray="4 3.3"/>
<line x1="619.95" y1="236.5" x2="619.95" y2="730.5" stroke="#7b8898" stroke-width="1.3" stroke-dasharray="4 3.3"/>
<line x1="659.2" y1="236.5" x2="659.2" y2="730.5" stroke="#7b8898" stroke-width="1.3" stroke-dasharray="4 3.3"/>
<line x1="698.45" y1="236.5" x2="698.45" y2="730.5" stroke="#7b8898" stroke-width="1.3" stroke-dasharray="4 3.3"/>
<line x1="737.7" y1="236.5" x2="737.7" y2="730.5" stroke="#7b8898" stroke-width="1.3" stroke-dasharray="4 3.3"/>
<line x1="776.95" y1="236.5" x2="776.95" y2="730.5" stroke="#7b8898" stroke-width="1.3" stroke-dasharray="4 3.3"/>
<line x1="816.2" y1="236.5" x2="816.2" y2="730.5" stroke="#7b8898" stroke-width="1.3" stroke-dasharray="4 3.3"/>
<line x1="855.45" y1="236.5" x2="855.45" y2="730.5" stroke="#7b8898" stroke-width="1.3" stroke-dasharray="4 3.3"/>
<line x1="894.7" y1="236.5" x2="894.7" y2="730.5" stroke="#7b8898" stroke-width="1.3" stroke-dasharray="4 3.3"/>
<line x1="933.95" y1="236.5" x2="933.95" y2="730.5" stroke="#7b8898" stroke-width="1.3" stroke-dasharray="4 3.3"/>
<line x1="973.2" y1="236.5" x2="973.2" y2="730.5" stroke="#7b8898" stroke-width="1.3" stroke-dasharray="4 3.3"/>
<line x1="1012.45" y1="236.5" x2="1012.45" y2="730.5" stroke="#7b8898" stroke-width="1.3" stroke-dasharray="4 3.3"/>
<line x1="1051.7" y1="236.5" x2="1051.7" y2="730.5" stroke="#7b8898" stroke-width="1.3" stroke-dasharray="4 3.3"/>
<line x1="1090.95" y1="236.5" x2="1090.95" y2="730.5" stroke="#7b8898" stroke-width="1.3" stroke-dasharray="4 3.3"/>
<line x1="1130.2" y1="236.5" x2="1130.2" y2="730.5" stroke="#7b8898" stroke-width="1.3" stroke-dasharray="4 3.3"/>
<line x1="1169.45" y1="236.5" x2="1169.45" y2="730.5" stroke="#7b8898" stroke-width="1.3" stroke-dasharray="4 3.3"/>
<line x1="1208.7" y1="236.5" x2="1208.7" y2="730.5" stroke="#7b8898" stroke-width="1.3" stroke-dasharray="4 3.3"/>
<line x1="1247.95" y1="236.5" x2="1247.95" y2="730.5" stroke="#7b8898" stroke-width="1.3" stroke-dasharray="4 3.3"/>
<line x1="1287.2" y1="236.5" x2="1287.2" y2="730.5" stroke="#7b8898" stroke-width="1.3" stroke-dasharray="4 3.3"/>
<line x1="1326.45" y1="236.5" x2="1326.45" y2="730.5" stroke="#7b8898" stroke-width="1.3" stroke-dasharray="4 3.3"/>
<line x1="1365.7" y1="236.5" x2="1365.7" y2="730.5" stroke="#7b8898" stroke-width="1.3" stroke-dasharray="4 3.3"/>
<line x1="1404.95" y1="236.5" x2="1404.95" y2="730.5" stroke="#7b8898" stroke-width="1.3" stroke-dasharray="4 3.3"/>
<line x1="1444.2" y1="236.5" x2="1444.2" y2="730.5" stroke="#7b8898" stroke-width="1.3" stroke-dasharray="4 3.3"/>
<line x1="1483.45" y1="236.5" x2="1483.45" y2="730.5" stroke="#7b8898" stroke-width="1.3" stroke-dasharray="4 3.3"/>
<line x1="1522.7" y1="236.5" x2="1522.7" y2="730.5" stroke="#7b8898" stroke-width="1.3" stroke-dasharray="4 3.3"/>
<line x1="1561.95" y1="236.5" x2="1561.95" y2="730.5" stroke="#7b8898" stroke-width="1.3" stroke-dasharray="4 3.3"/>
<line x1="1601.2" y1="236.5" x2="1601.2" y2="730.5" stroke="#7b8898" stroke-width="1.3" stroke-dasharray="4 3.3"/>
<line x1="1640.45" y1="236.5" x2="1640.45" y2="730.5" stroke="#7b8898" stroke-width="1.3" stroke-dasharray="4 3.3"/>
<line x1="1679.7" y1="236.5" x2="1679.7" y2="730.5" stroke="#7b8898" stroke-width="1.3" stroke-dasharray="4 3.3"/>
<line x1="1718.95" y1="236.5" x2="1718.95" y2="730.5" stroke="#7b8898" stroke-width="1.3" stroke-dasharray="4 3.3"/>
<line x1="1758.2" y1="236.5" x2="1758.2" y2="730.5" stroke="#7b8898" stroke-width="1.3" stroke-dasharray="4 3.3"/>
<line x1="1797.45" y1="236.5" x2="1797.45" y2="730.5" stroke="#7b8898" stroke-width="1.3" stroke-dasharray="4 3.3"/>
<line x1="1836.7" y1="236.5" x2="1836.7" y2="730.5" stroke="#7b8898" stroke-width="1.3" stroke-dasharray="4 3.3"/>
<line x1="384.5" y1="241.4" x2="1848" y2="241.4" stroke="#7b8898" stroke-width="1.3" stroke-dasharray="4 3.3"/>
<line x1="384.5" y1="281.85" x2="1848" y2="281.85" stroke="#7b8898" stroke-width="1.3" stroke-dasharray="4 3.3"/>
<line x1="384.5" y1="322.3" x2="1848" y2="322.3" stroke="#7b8898" stroke-width="1.3" stroke-dasharray="4 3.3"/>
<line x1="384.5" y1="362.75" x2="1848" y2="362.75" stroke="#7b8898" stroke-width="1.3" stroke-dasharray="4 3.3"/>
<line x1="384.5" y1="403.2" x2="1848" y2="403.2" stroke="#7b8898" stroke-width="1.3" stroke-dasharray="4 3.3"/>
<line x1="384.5" y1="443.65" x2="1848" y2="443.65" stroke="#7b8898" stroke-width="1.3" stroke-dasharray="4 3.3"/>
<line x1="384.5" y1="484.1" x2="1848" y2="484.1" stroke="#7b8898" stroke-width="1.3" stroke-dasharray="4 3.3"/>
<line x1="384.5" y1="524.55" x2="1848" y2="524.55" stroke="#7b8898" stroke-width="1.3" stroke-dasharray="4 3.3"/>
<line x1="384.5" y1="565.0" x2="1848" y2="565.0" stroke="#7b8898" stroke-width="1.3" stroke-dasharray="4 3.3"/>
<line x1="384.5" y1="605.45" x2="1848" y2="605.45" stroke="#7b8898" stroke-width="1.3" stroke-dasharray="4 3.3"/>
<line x1="384.5" y1="645.9" x2="1848" y2="645.9" stroke="#7b8898" stroke-width="1.3" stroke-dasharray="4 3.3"/>
<line x1="384.5" y1="686.35" x2="1848" y2="686.35" stroke="#7b8898" stroke-width="1.3" stroke-dasharray="4 3.3"/>
<line x1="384.5" y1="726.8" x2="1848" y2="726.8" stroke="#7b8898" stroke-width="1.3" stroke-dasharray="4 3.3"/>
<rect x="383.6" y="235.6" width="1464.8" height="495.2" fill="none" stroke="#ffffff" stroke-width="1.3"/>
<line x1="1848.5" y1="241.4" x2="1853" y2="241.4" stroke="#fff" stroke-width="1.3"/>
<text x="1856.6" y="246.1" font-size="11.4" fill="#ffffff" textLength="38.4" lengthAdjust="spacingAndGlyphs">1.07665</text>
<line x1="1848.5" y1="281.85" x2="1853" y2="281.85" stroke="#fff" stroke-width="1.3"/>
<text x="1856.6" y="286.55" font-size="11.4" fill="#ffffff" textLength="38.4" lengthAdjust="spacingAndGlyphs">1.07455</text>
<line x1="1848.5" y1="322.3" x2="1853" y2="322.3" stroke="#fff" stroke-width="1.3"/>
<text x="1856.6" y="327.0" font-size="11.4" fill="#ffffff" textLength="38.4" lengthAdjust="spacingAndGlyphs">1.07240</text>
<line x1="1848.5" y1="362.75" x2="1853" y2="362.75" stroke="#fff" stroke-width="1.3"/>
<text x="1856.6" y="367.45" font-size="11.4" fill="#ffffff" textLength="38.4" lengthAdjust="spacingAndGlyphs">1.07030</text>
<line x1="1848.5" y1="403.20000000000005" x2="1853" y2="403.20000000000005" stroke="#fff" stroke-width="1.3"/>
<text x="1856.6" y="407.9" font-size="11.4" fill="#ffffff" textLength="38.4" lengthAdjust="spacingAndGlyphs">1.06815</text>
<line x1="1848.5" y1="443.65" x2="1853" y2="443.65" stroke="#fff" stroke-width="1.3"/>
<text x="1856.6" y="448.35" font-size="11.4" fill="#ffffff" textLength="38.4" lengthAdjust="spacingAndGlyphs">1.06605</text>
<line x1="1848.5" y1="484.1" x2="1853" y2="484.1" stroke="#fff" stroke-width="1.3"/>
<text x="1856.6" y="488.8" font-size="11.4" fill="#ffffff" textLength="38.4" lengthAdjust="spacingAndGlyphs">1.06390</text>
<line x1="1848.5" y1="524.5500000000001" x2="1853" y2="524.5500000000001" stroke="#fff" stroke-width="1.3"/>
<text x="1856.6" y="529.25" font-size="11.4" fill="#ffffff" textLength="38.4" lengthAdjust="spacingAndGlyphs">1.06180</text>
<line x1="1848.5" y1="565.0" x2="1853" y2="565.0" stroke="#fff" stroke-width="1.3"/>
<text x="1856.6" y="569.7" font-size="11.4" fill="#ffffff" textLength="38.4" lengthAdjust="spacingAndGlyphs">1.05965</text>
<line x1="1848.5" y1="605.45" x2="1853" y2="605.45" stroke="#fff" stroke-width="1.3"/>
<text x="1856.6" y="610.15" font-size="11.4" fill="#ffffff" textLength="38.4" lengthAdjust="spacingAndGlyphs">1.05755</text>
<line x1="1848.5" y1="645.9" x2="1853" y2="645.9" stroke="#fff" stroke-width="1.3"/>
<text x="1856.6" y="650.6" font-size="11.4" fill="#ffffff" textLength="38.4" lengthAdjust="spacingAndGlyphs">1.05540</text>
<line x1="1848.5" y1="686.35" x2="1853" y2="686.35" stroke="#fff" stroke-width="1.3"/>
<text x="1856.6" y="691.05" font-size="11.4" fill="#ffffff" textLength="38.4" lengthAdjust="spacingAndGlyphs">1.05330</text>
<line x1="1848.5" y1="726.8000000000001" x2="1853" y2="726.8000000000001" stroke="#fff" stroke-width="1.3"/>
<text x="1856.6" y="731.5" font-size="11.4" fill="#ffffff" textLength="38.4" lengthAdjust="spacingAndGlyphs">1.05115</text>
<line x1="383.8" y1="731" x2="383.8" y2="737" stroke="#fff" stroke-width="1.3"/>
<text x="382.8" y="746.8" font-size="12.0" fill="#ffffff">30 Oct 2023</text>
<line x1="462.3" y1="731" x2="462.3" y2="737" stroke="#fff" stroke-width="1.3"/>
<text x="461.3" y="746.8" font-size="12.0" fill="#ffffff">30 Oct 12:00</text>
<line x1="540.8" y1="731" x2="540.8" y2="737" stroke="#fff" stroke-width="1.3"/>
<text x="539.8" y="746.8" font-size="12.0" fill="#ffffff">30 Oct 20:00</text>
<line x1="619.3" y1="731" x2="619.3" y2="737" stroke="#fff" stroke-width="1.3"/>
<text x="618.3" y="746.8" font-size="12.0" fill="#ffffff">31 Oct 04:00</text>
<line x1="697.8" y1="731" x2="697.8" y2="737" stroke="#fff" stroke-width="1.3"/>
<text x="696.8" y="746.8" font-size="12.0" fill="#ffffff">31 Oct 12:00</text>
<line x1="776.3" y1="731" x2="776.3" y2="737" stroke="#fff" stroke-width="1.3"/>
<text x="775.3" y="746.8" font-size="12.0" fill="#ffffff">31 Oct 20:00</text>
<line x1="854.8" y1="731" x2="854.8" y2="737" stroke="#fff" stroke-width="1.3"/>
<text x="853.8" y="746.8" font-size="12.0" fill="#ffffff">1 Nov 04:00</text>
<line x1="933.3" y1="731" x2="933.3" y2="737" stroke="#fff" stroke-width="1.3"/>
<text x="932.3" y="746.8" font-size="12.0" fill="#ffffff">1 Nov 12:00</text>
<line x1="1011.8" y1="731" x2="1011.8" y2="737" stroke="#fff" stroke-width="1.3"/>
<text x="1010.8" y="746.8" font-size="12.0" fill="#ffffff">1 Nov 20:00</text>
<line x1="1090.3" y1="731" x2="1090.3" y2="737" stroke="#fff" stroke-width="1.3"/>
<text x="1089.3" y="746.8" font-size="12.0" fill="#ffffff">2 Nov 04:00</text>
<line x1="1168.8" y1="731" x2="1168.8" y2="737" stroke="#fff" stroke-width="1.3"/>
<text x="1167.8" y="746.8" font-size="12.0" fill="#ffffff">2 Nov 12:00</text>
<line x1="1247.3" y1="731" x2="1247.3" y2="737" stroke="#fff" stroke-width="1.3"/>
<text x="1246.3" y="746.8" font-size="12.0" fill="#ffffff">2 Nov 20:00</text>
<line x1="1325.8" y1="731" x2="1325.8" y2="737" stroke="#fff" stroke-width="1.3"/>
<text x="1324.8" y="746.8" font-size="12.0" fill="#ffffff">3 Nov 04:00</text>
<line x1="1404.3" y1="731" x2="1404.3" y2="737" stroke="#fff" stroke-width="1.3"/>
<text x="1403.3" y="746.8" font-size="12.0" fill="#ffffff">3 Nov 12:00</text>
<line x1="1482.8" y1="731" x2="1482.8" y2="737" stroke="#fff" stroke-width="1.3"/>
<text x="1481.8" y="746.8" font-size="12.0" fill="#ffffff">3 Nov 20:00</text>
<line x1="1561.3" y1="731" x2="1561.3" y2="737" stroke="#fff" stroke-width="1.3"/>
<text x="1560.3" y="746.8" font-size="12.0" fill="#ffffff">6 Nov 04:00</text>
<line x1="1639.8" y1="731" x2="1639.8" y2="737" stroke="#fff" stroke-width="1.3"/>
<text x="1638.8" y="746.8" font-size="12.0" fill="#ffffff">6 Nov 12:00</text>
<line x1="1718.3" y1="731" x2="1718.3" y2="737" stroke="#fff" stroke-width="1.3"/>
<text x="1717.3" y="746.8" font-size="12.0" fill="#ffffff">6 Nov 20:00</text>
<line x1="384" y1="337.3" x2="1848" y2="337.3" stroke="#8a97a8" stroke-width="1.3"/>
<path fill="none" stroke="#f00000" stroke-width="1.15" d="M384 636.2C390.5 635.5 410.2 634.2 423 632C435.8 629.8 448.0 626.0 461 622.8C474.0 619.6 487.8 616.0 501 613C514.2 610.0 527.3 607.7 540.5 605C553.7 602.3 566.9 599.0 580 596.8C593.1 594.6 606.0 595.3 619 592C632.0 588.7 647.8 579.8 658 576.9C668.2 574.0 673.5 575.3 680 574.7C686.5 574.1 687.5 573.9 697 573.3C706.5 572.7 723.8 571.4 737 571.2C750.2 571.0 763.0 572.0 776 572C789.0 572.0 802.0 571.3 815 571.2C828.0 571.1 840.8 570.8 854 571.2C867.2 571.7 880.8 572.8 894 573.9C907.2 575.0 920.3 576.5 933 578.1C945.7 579.7 957.0 581.5 970 583.5C983.0 585.5 997.5 588.7 1011 589.9C1024.5 591.1 1037.8 590.3 1051 590.7C1064.2 591.1 1077.0 592.4 1090 592.5C1103.0 592.6 1116.0 592.9 1129 591.5C1142.0 590.1 1154.8 584.1 1168 584C1181.2 583.9 1194.8 590.0 1208 590.7C1221.2 591.4 1234.0 589.6 1247 588C1260.0 586.4 1272.8 583.5 1286 581C1299.2 578.5 1312.9 575.8 1326 573C1339.1 570.2 1351.7 568.9 1364.7 564C1377.7 559.1 1390.9 551.2 1403.9 543.5C1417.0 535.8 1429.9 526.2 1443 517.5C1456.1 508.8 1469.4 500.1 1482.5 491.2C1495.6 482.3 1508.7 471.9 1521.7 464C1534.8 456.1 1547.7 451.1 1560.8 444C1573.9 436.9 1587.2 428.4 1600.3 421.3C1613.4 414.2 1626.4 407.0 1639.5 401.3C1652.6 395.6 1665.6 391.3 1678.7 387.2C1691.8 383.1 1704.8 380.2 1717.9 376.6C1731.1 373.0 1751.0 367.2 1757.6 365.3"/>
<clipPath id="inner"><rect x="384" y="236" width="1464" height="495"/></clipPath><path clip-path="url(#inner)" fill="none" stroke="#00ff00" stroke-width="2.7" d="M383.3 622.0V639.0M367.8 632.0H383.3M383.3 632.0H398.8M423.0 584.0V659.5M407.5 632.0H423.0M423.0 592.5H438.5M462.3 529.3V609.3M446.8 591.5H462.3M462.3 546.0H477.8M501.5 509.3V576.0M486.0 544.8H501.5M501.5 537.6H517.0M540.8 515.5V539.2M525.3 536.5H540.8M540.8 531.2H556.3M580.0 523.7V553.9M564.5 532.5H580.0M580.0 540.0H595.5M619.3 536.8V577.3M603.8 541.3H619.3M619.3 560.8H634.8M658.5 425.3V570.0M643.0 560.8H658.5M658.5 428.3H674.0M697.8 415.2V556.8M682.3 428.3H697.8M697.8 552.5H713.3M737.0 528.0V641.3M721.5 553.6H737.0M737.0 606.1H752.5M776.3 584.0V615.5M760.8 606.1H776.3M776.3 606.1H791.8M815.5 594.1V621.9M800.0 602.7H815.5M815.5 617.3H831.0M854.8 607.5V626.1M839.3 618.7H854.8M854.8 619.5H870.3M894.0 600.0V664.0M878.5 620.8H894.0M894.0 655.2H909.5M933.3 638.1V709.3M917.8 656.5H933.3M933.3 688.0H948.8M972.5 612.0V696.0M957.0 688.0H972.5M972.5 686.1H988.0M1011.8 604.0V717.3M996.3 685.3H1011.8M1011.8 618.7H1027.3M1051.0 554.1V619.5M1035.5 618.1H1051.0M1051.0 564.5H1066.5M1090.3 554.1V571.5M1074.8 564.5H1090.3M1090.3 563.2H1105.8M1129.5 511.5V576.0M1114.0 563.2H1129.5M1129.5 514.1H1145.0M1168.8 428.0V518.7M1153.3 513.3H1168.8M1168.8 470.1H1184.3M1208.0 464.8V539.2M1192.5 468.8H1208.0M1208.0 504.5H1223.5M1247.3 496.0V532.0M1231.8 505.9H1247.3M1247.3 519.2H1262.8M1286.5 514.1V531.5M1271.0 520.0H1286.5M1286.5 517.9H1302.0M1325.8 497.3V518.7M1310.3 516.5H1325.8M1325.8 503.2H1341.3M1365.0 465.3V521.3M1349.5 500.5H1365.0M1365.0 467.5H1380.5M1404.3 320.5V482.1M1388.8 467.5H1404.3M1404.3 337.9H1419.8M1443.5 278.1V380.5M1428.0 336.0H1443.5M1443.5 299.7H1459.0M1482.8 290.7V326.7M1467.3 299.7H1482.8M1482.8 311.7H1498.3M1522.0 303.5V337.3M1506.5 327.5H1522.0M1522.0 315.7H1537.5M1561.3 294.1V319.2M1545.8 314.7H1561.3M1561.3 301.1H1576.8M1600.5 260.5V309.9M1585.0 301.1H1600.5M1600.5 278.9H1616.0M1639.8 260.5V301.9M1624.3 278.9H1639.8M1639.8 297.1H1655.3M1679.0 272.8V319.2M1663.5 297.1H1679.0M1679.0 299.7H1694.5M1718.3 296.0V337.9M1702.8 301.9H1718.3M1718.3 336.5H1733.8M1757.5 329.3V343.5M1742.0 336.5H1757.5M1757.5 336.5H1773.0"/>
<rect x="1852" y="330.4" width="47.8" height="13.3" fill="#ffffff"/>
<text x="1856.6" y="341.9" font-size="11.4" fill="#000000" textLength="38.4" lengthAdjust="spacingAndGlyphs">1.07167</text>
<text x="388.4" y="250.1" font-size="12.4" fill="#ffffff" textLength="245.5" lengthAdjust="spacingAndGlyphs" xml:space="preserve">EURUSD,H4  1.07172 1.07199 1.07132 1.07167</text>
<path d="M1708.5 461.4 L1801.2 455.2 L1801.2 442.4 L1840.7 460.9 L1801.6 481.1 L1801.6 468.8 L1708.5 466.1 Z" fill="#64c9a1" stroke="#64c9a1" stroke-width="2" stroke-linejoin="round"/>
<circle cx="1112.9" cy="602.5" r="2.4" fill="#64c9a1"/><circle cx="1709" cy="463.8" r="2.5" fill="#64c9a1"/>
<path d="M1110.8 601.7 L1115 601.7 L1120.2 684.8 L1131.8 684.8 L1114.2 721.2 L1096.1 684.8 L1107.4 684.8 Z" fill="#64c9a1" stroke="#64c9a1" stroke-width="2" stroke-linejoin="round"/>
</g>
<rect x="379" y="759" width="1528" height="23" fill="#f3f3f3"/>
<line x1="378" y1="759.5" x2="1907" y2="759.5" stroke="#111" stroke-width="1.6"/>
<path d="M385.6 759.5 L385.6 781 L482.7 781 L482.7 759.5" fill="#ffffff" stroke="#111" stroke-width="1.6"/>
<text x="399.2" y="774.6" font-size="14.4" fill="#000" textLength="69.8" lengthAdjust="spacingAndGlyphs">EURUSD,H4</text>
<text x="496.8" y="774.6" font-size="14.4" fill="#808080" textLength="69.8" lengthAdjust="spacingAndGlyphs">USDCHF,H4</text>
<line x1="581.6" y1="762" x2="581.6" y2="777" stroke="#555" stroke-width="1.3"/>
<text x="594" y="774.6" font-size="14.4" fill="#808080" textLength="65.5" lengthAdjust="spacingAndGlyphs">USDJPY,H4</text>
<line x1="674.6" y1="762" x2="674.6" y2="777" stroke="#555" stroke-width="1.3"/>
<path d="M1866 769.5 l4 -4 v8 z M1894 769.5 l-4 -4 v8 z" fill="#777"/>
<line x1="142" y1="782.4" x2="379" y2="782.4" stroke="#a8a8a8" stroke-width="1.4"/>
<rect x="142" y="783" width="1765" height="282" fill="#f3f3f3"/>
<rect x="159.4" y="788.2" width="1744" height="248" fill="#ffffff"/>
<line x1="159.4" y1="788.2" x2="1903" y2="788.2" stroke="#a8a8a8" stroke-width="1.3"/>
<line x1="159.6" y1="788.2" x2="159.6" y2="1059" stroke="#b4b4b4" stroke-width="1.4"/>
<path d="M148.2 792.5 L153.8 798.0999999999999 M153.8 792.5 L148.2 798.0999999999999" stroke="#111" stroke-width="1.4"/>
<rect x="142" y="805.2" width="15.8" height="256" fill="#808080"/>
<text x="0" y="0" font-size="12.5" fill="#c8c8c8" transform="translate(154.5,1058) rotate(-90)" textLength="38" lengthAdjust="spacingAndGlyphs">Tester</text>
<rect x="169.3" y="800" width="146.5" height="25" fill="#ffffff" stroke="#b4b4b4" stroke-width="1.2"/>
<rect x="294.8" y="803" width="18" height="19" fill="#ffffff" stroke="#bcbcbc" stroke-width="1" rx="2"/>
<path d="M300.3 810.5 l3.5 3.5 l3.5 -3.5" fill="none" stroke="#333" stroke-width="1.2"/>
<text x="173.4" y="818.4" font-size="14.4" fill="#000" textLength="52.8" lengthAdjust="spacingAndGlyphs">Indicator</text>
<rect x="325.4" y="800.7" width="1372.4" height="24.299999999999955" fill="#f4f4f4" stroke="#b4b4b4" stroke-width="1.2"/>
<rect x="1676.8" y="803.7" width="18" height="18.299999999999955" fill="#ffffff" stroke="#bcbcbc" stroke-width="1" rx="2"/>
<path d="M1682.3 810.85 l3.5 3.5 l3.5 -3.5" fill="none" stroke="#333" stroke-width="1.2"/>
<text x="331.4" y="818.4" font-size="14.4" fill="#000" textLength="248.8" lengthAdjust="spacingAndGlyphs">FxMagnetic Engulfing Indicator v1.2.2.ex4</text>
<rect x="1707.2" y="799.4" width="183.70000000000005" height="26.899999999999977" fill="#f3f3f3" stroke="#b4b4b4" stroke-width="1.2"/>
<text x="1799.0500000000002" y="818.7" font-size="14.4" fill="#000" text-anchor="middle" textLength="115.5" lengthAdjust="spacingAndGlyphs">Indicator properties</text>
<rect x="1707.2" y="835" width="183.70000000000005" height="27" fill="#f3f3f3" stroke="#b4b4b4" stroke-width="1.2"/>
<text x="1799.0500000000002" y="854.9" font-size="14.4" fill="#000" text-anchor="middle" textLength="104.8" lengthAdjust="spacingAndGlyphs">Symbol properties</text>
<rect x="1707.2" y="870.6" width="183.70000000000005" height="26.799999999999955" fill="#f3f3f3" stroke="#b4b4b4" stroke-width="1.2"/>
<text x="1799.0500000000002" y="890.4" font-size="14.4" fill="#000" text-anchor="middle" textLength="65.0" lengthAdjust="spacingAndGlyphs">Open chart</text>
<rect x="1707.2" y="906" width="183.70000000000005" height="27" fill="#f3f3f3" stroke="#b4b4b4" stroke-width="1.2"/>
<text x="1799.0500000000002" y="926.1" font-size="14.4" fill="#000" text-anchor="middle" textLength="92.7" lengthAdjust="spacingAndGlyphs">Modify indicator</text>
<text x="313.6" y="855.1" font-size="14.4" fill="#000" text-anchor="end" textLength="45.6" lengthAdjust="spacingAndGlyphs">Symbol:</text>
<rect x="325.4" y="836" width="1061.5" height="24.600000000000023" fill="#ffffff" stroke="#b4b4b4" stroke-width="1.2"/>
<rect x="1365.9" y="839" width="18" height="18.600000000000023" fill="#ffffff" stroke="#bcbcbc" stroke-width="1" rx="2"/>
<path d="M1371.4 846.3 l3.5 3.5 l3.5 -3.5" fill="none" stroke="#333" stroke-width="1.2"/>
<text x="313.6" y="890.1" font-size="14.4" fill="#000" text-anchor="end" textLength="38.2" lengthAdjust="spacingAndGlyphs">Model:</text>
<rect x="325.4" y="871.6" width="1061.5" height="24.799999999999955" fill="#ffffff" stroke="#b4b4b4" stroke-width="1.2"/>
<rect x="1365.9" y="874.6" width="18" height="18.799999999999955" fill="#ffffff" stroke="#bcbcbc" stroke-width="1" rx="2"/>
<path d="M1371.4 882.0 l3.5 3.5 l3.5 -3.5" fill="none" stroke="#333" stroke-width="1.2"/>
<text x="329.2" y="890.1" font-size="14.4" fill="#000" textLength="574.0" lengthAdjust="spacingAndGlyphs">Every tick (the most precise method based on all available least timeframes to generate each tick)</text>
<text x="1539.4" y="854.9" font-size="14.4" fill="#000" text-anchor="end" textLength="40.4" lengthAdjust="spacingAndGlyphs">Period:</text>
<rect x="1551" y="836.5" width="147" height="24.5" fill="#ffffff" stroke="#b4b4b4" stroke-width="1.2"/>
<rect x="1677" y="839.5" width="18" height="18.5" fill="#ffffff" stroke="#bcbcbc" stroke-width="1" rx="2"/>
<path d="M1682.5 846.75 l3.5 3.5 l3.5 -3.5" fill="none" stroke="#333" stroke-width="1.2"/>
<text x="1555.5" y="854.9" font-size="14.4" fill="#000" textLength="14.5" lengthAdjust="spacingAndGlyphs">H1</text>
<text x="1539.6" y="890.4" font-size="14.4" fill="#000" text-anchor="end" textLength="44.0" lengthAdjust="spacingAndGlyphs">Spread:</text>
<rect x="1551" y="872" width="147" height="24.600000000000023" fill="#ffffff" stroke="#b4b4b4" stroke-width="1.2"/>
<rect x="1677" y="875" width="18" height="18.600000000000023" fill="#ffffff" stroke="#bcbcbc" stroke-width="1" rx="2"/>
<path d="M1682.5 882.3 l3.5 3.5 l3.5 -3.5" fill="none" stroke="#333" stroke-width="1.2"/>
<text x="1558.7" y="889.8" font-size="14.4" fill="#000" textLength="44.3" lengthAdjust="spacingAndGlyphs">Current</text>
<text x="1672.8" y="930.1" font-size="14.4" fill="#a0a0a0" text-anchor="end" textLength="71.1" lengthAdjust="spacingAndGlyphs">Optimization</text>
<rect x="1682.8" y="913" width="15" height="15" fill="#ffffff" stroke="#8e8e8e" stroke-width="1.2"/>
<text x="304" y="930.3" font-size="14.4" fill="#000" text-anchor="end" textLength="52.0" lengthAdjust="spacingAndGlyphs">Use date</text>
<rect x="309.5" y="913.4" width="15.4" height="15" fill="#ffffff" stroke="#8e8e8e" stroke-width="1.2"/>
<text x="469" y="924.8" font-size="14.4" fill="#a0a0a0" text-anchor="end" textLength="33.1" lengthAdjust="spacingAndGlyphs">From:</text>
<rect x="481.3" y="907.4" width="146.3" height="23.200000000000045" fill="#f4f4f4" stroke="#b4b4b4" stroke-width="1.2"/>
<rect x="606.6" y="910.4" width="18" height="17.200000000000045" fill="#f4f4f4" stroke="#bcbcbc" stroke-width="1" rx="2"/>
<path d="M612.1 917.0 l3.5 3.5 l3.5 -3.5" fill="none" stroke="#aaa" stroke-width="1.2"/>
<text x="486" y="924.8" font-size="14.4" fill="#a8a8a8" textLength="64.0" lengthAdjust="spacingAndGlyphs">1970.01.01</text>
<text x="782" y="924.8" font-size="14.4" fill="#a0a0a0" text-anchor="end" textLength="19.0" lengthAdjust="spacingAndGlyphs">To:</text>
<rect x="792.4" y="907.4" width="146.5" height="23.200000000000045" fill="#f4f4f4" stroke="#b4b4b4" stroke-width="1.2"/>
<rect x="917.9" y="910.4" width="18" height="17.200000000000045" fill="#f4f4f4" stroke="#bcbcbc" stroke-width="1" rx="2"/>
<path d="M923.4 917.0 l3.5 3.5 l3.5 -3.5" fill="none" stroke="#aaa" stroke-width="1.2"/>
<text x="796.3" y="924.8" font-size="14.4" fill="#a8a8a8" textLength="64.0" lengthAdjust="spacingAndGlyphs">1970.01.01</text>
<text x="299" y="965.9" font-size="14.4" fill="#a0a0a0" text-anchor="end" textLength="67.4" lengthAdjust="spacingAndGlyphs">Visual mode</text>
<rect x="309.5" y="949" width="15.4" height="15" fill="#ffffff" stroke="#8e8e8e" stroke-width="1.2"/>
<path d="M312.5 956 l3 3.5 l6 -7" fill="none" stroke="#000" stroke-width="2"/>
<rect x="342.3" y="952.5" width="201.9" height="10.5" fill="#ffffff" stroke="#b8b8b8" stroke-width="1.2"/>
<rect x="494" y="946" width="13.8" height="24" fill="#efefef" stroke="#b0b0b0" stroke-width="1.2"/>
<rect x="563.3" y="942.7" width="27.300000000000068" height="27.59999999999991" fill="#f3f3f3" stroke="#b4b4b4" stroke-width="1.2"/>
<line x1="571.7" y1="951.5" x2="571.7" y2="964.2" stroke="#111" stroke-width="1.6"/>
<line x1="580.5" y1="951.5" x2="580.5" y2="964.2" stroke="#111" stroke-width="1.6"/>
<rect x="600.2" y="942.7" width="183.39999999999998" height="27.699999999999932" fill="#f3f3f3" stroke="#b4b4b4" stroke-width="1.2"/>
<text x="691.9000000000001" y="961.8" font-size="14.4" fill="#000" text-anchor="middle" textLength="39.0" lengthAdjust="spacingAndGlyphs">Skip to</text>
<rect x="792.4" y="942.7" width="146.5" height="23.799999999999955" fill="#ffffff" stroke="#b4b4b4" stroke-width="1.2"/>
<rect x="917.9" y="945.7" width="18" height="17.799999999999955" fill="#ffffff" stroke="#bcbcbc" stroke-width="1" rx="2"/>
<path d="M923.4 952.6 l3.5 3.5 l3.5 -3.5" fill="none" stroke="#333" stroke-width="1.2"/>
<text x="796.3" y="959.8" font-size="14.4" fill="#000" textLength="66.0" lengthAdjust="spacingAndGlyphs">2023.12.02</text>
<rect x="169.3" y="999.9" width="1528.5" height="24.4" fill="#ffffff" stroke="#b8b8b8" stroke-width="1.2"/>
<rect x="1707.5" y="999.5" width="183.0" height="27.5" fill="#f3f3f3" stroke="#b4b4b4" stroke-width="1.2"/>
<text x="1799.0" y="1018.5" font-size="14.4" fill="#000" text-anchor="middle" textLength="35.0" lengthAdjust="spacingAndGlyphs" font-weight="bold">Start</text>
<rect x="161" y="1036.5" width="1741" height="23.3" fill="#f3f3f3"/>
<line x1="159.6" y1="1036" x2="159.6" y2="1059.5" stroke="#b4b4b4" stroke-width="1.4"/>
<line x1="236" y1="1036.5" x2="1902" y2="1036.5" stroke="#111" stroke-width="1.6"/>
<path d="M163.5 1036 L163.5 1057.8 L236 1057.8 L236 1036" fill="#ffffff" stroke="#000" stroke-width="1.5"/>
<text x="175" y="1051.5" font-size="14.4" fill="#000" textLength="47.0" lengthAdjust="spacingAndGlyphs">Settings</text>
<text x="248.5" y="1051.5" font-size="14.4" fill="#808080" textLength="42.5" lengthAdjust="spacingAndGlyphs">Journal</text>
<line x1="305.5" y1="1041" x2="305.5" y2="1055" stroke="#555" stroke-width="1.3"/>
<rect x="158" y="1059.8" width="1749" height="4" fill="#fafafa"/>
<line x1="142" y1="1064.5" x2="1907" y2="1064.5" stroke="#a8a8a8" stroke-width="1.2"/>
<rect x="142" y="1065" width="1764" height="29" fill="url(#sbar)"/>
<text x="144.5" y="1087.0" font-size="14.4" fill="#000" textLength="105.5" lengthAdjust="spacingAndGlyphs">For Help, press F1</text>
<line x1="1049.3" y1="1069" x2="1049.3" y2="1091" stroke="#a0a0a0" stroke-width="1.2"/>
<line x1="1186.4" y1="1069" x2="1186.4" y2="1091" stroke="#a0a0a0" stroke-width="1.2"/>
<line x1="1310.2" y1="1069" x2="1310.2" y2="1091" stroke="#a0a0a0" stroke-width="1.2"/>
<line x1="1397.4" y1="1069" x2="1397.4" y2="1091" stroke="#a0a0a0" stroke-width="1.2"/>
<line x1="1483" y1="1069" x2="1483" y2="1091" stroke="#a0a0a0" stroke-width="1.2"/>
<line x1="1566.5" y1="1069" x2="1566.5" y2="1091" stroke="#a0a0a0" stroke-width="1.2"/>
<line x1="1652" y1="1069" x2="1652" y2="1091" stroke="#a0a0a0" stroke-width="1.2"/>
<line x1="1734" y1="1069" x2="1734" y2="1091" stroke="#a0a0a0" stroke-width="1.2"/>
<text x="1055" y="1087.3" font-size="14.4" fill="#000" textLength="42.5" lengthAdjust="spacingAndGlyphs">Default</text>
<text x="1192.6" y="1087.3" font-size="14.4" fill="#000" textLength="106.4" lengthAdjust="spacingAndGlyphs">2023.11.01 08:00</text>
<text x="1316.3" y="1087.3" font-size="14.4" fill="#000" textLength="67.7" lengthAdjust="spacingAndGlyphs">O: 1.05679</text>
<text x="1403.5" y="1087.3" font-size="14.4" fill="#000" textLength="66.0" lengthAdjust="spacingAndGlyphs">H: 1.05775</text>
<text x="1489" y="1087.3" font-size="14.4" fill="#000" textLength="64.0" lengthAdjust="spacingAndGlyphs">L: 1.05453</text>
<text x="1572.5" y="1087.3" font-size="14.4" fill="#000" textLength="66.0" lengthAdjust="spacingAndGlyphs">C: 1.05491</text>
<text x="1658" y="1087.3" font-size="14.4" fill="#000" textLength="53.5" lengthAdjust="spacingAndGlyphs">V: 13533</text>
<text x="1774" y="1087.3" font-size="14.4" fill="#000" textLength="82.5" lengthAdjust="spacingAndGlyphs">No connection</text>
<rect x="1741" y="1072.6" width="28.7" height="15" fill="#a8170c"/>
<line x1="1745.2" y1="1072.6" x2="1745.2" y2="1087.6" stroke="#e8e0dc" stroke-width="1"/>
<line x1="1750.6" y1="1072.6" x2="1750.6" y2="1087.6" stroke="#e8e0dc" stroke-width="1"/>
<line x1="1756" y1="1072.6" x2="1756" y2="1087.6" stroke="#e8e0dc" stroke-width="1"/>
<line x1="1761.4" y1="1072.6" x2="1761.4" y2="1087.6" stroke="#e8e0dc" stroke-width="1"/>
<line x1="1766" y1="1072.6" x2="1766" y2="1087.6" stroke="#e8e0dc" stroke-width="1"/>
<rect x="1743" y="1076" width="1.5" height="1.3" fill="#e8e0dc"/>
<rect x="1748" y="1080" width="1.5" height="1.3" fill="#e8e0dc"/>
<rect x="1753" y="1075" width="1.5" height="1.3" fill="#e8e0dc"/>
<rect x="1758.5" y="1078" width="1.5" height="1.3" fill="#e8e0dc"/>
<rect x="1764" y="1076" width="1.5" height="1.3" fill="#e8e0dc"/>
<rect x="1748" y="1084" width="1.5" height="1.3" fill="#e8e0dc"/>
<rect x="1758.5" y="1083" width="1.5" height="1.3" fill="#e8e0dc"/>
</g>
</svg>
</body></html>
